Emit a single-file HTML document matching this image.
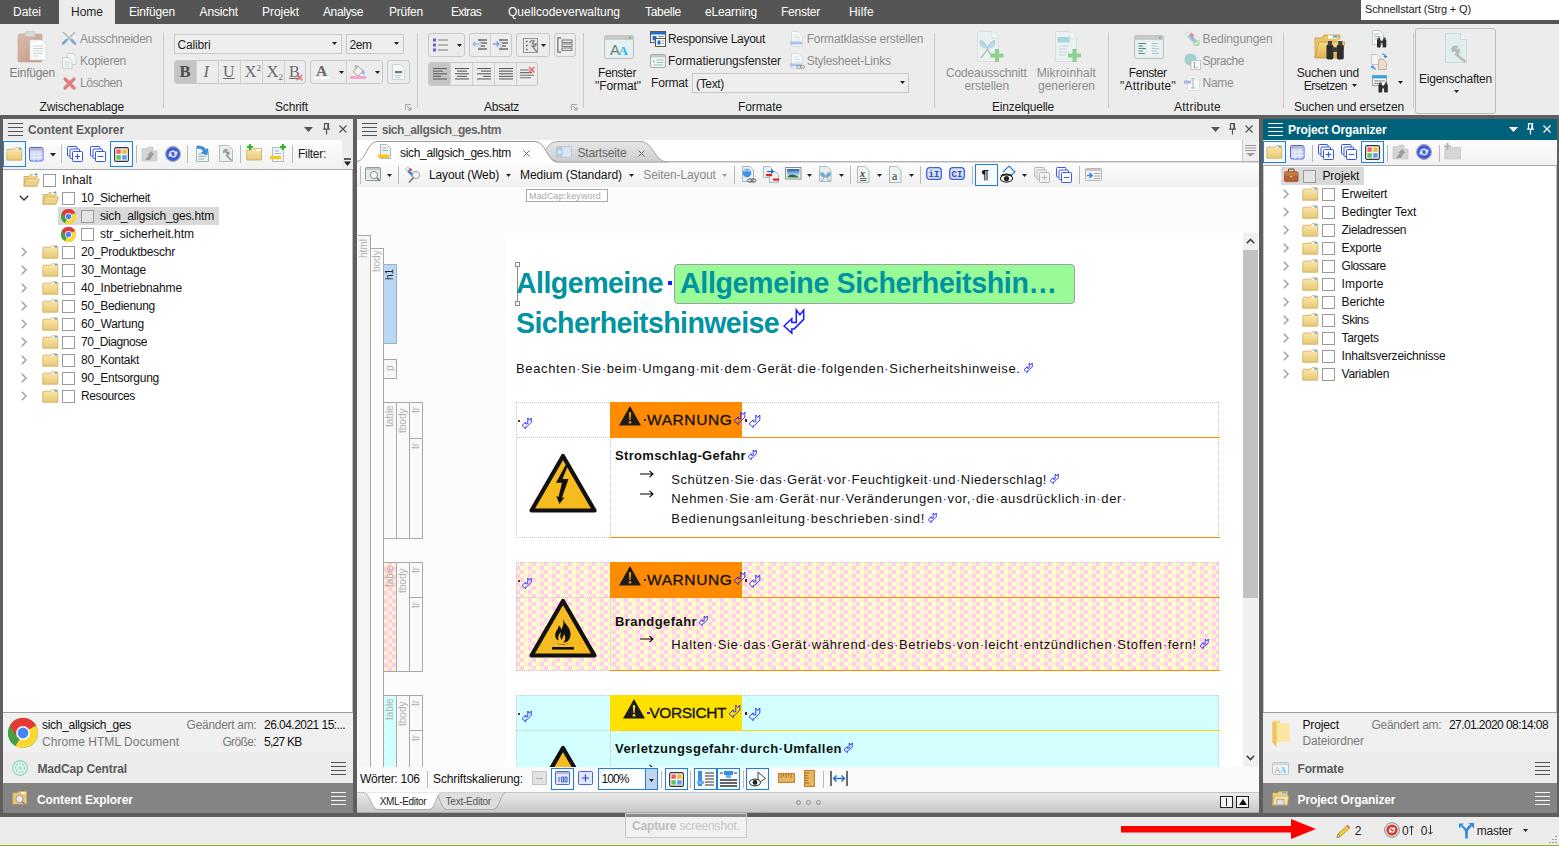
<!DOCTYPE html>
<html lang="de"><head><meta charset="utf-8"><title>MadCap Flare</title>
<style>
html,body{margin:0;padding:0;}
body{width:1559px;height:846px;overflow:hidden;background:#ececec;font-family:"Liberation Sans",sans-serif;font-size:12px;}
#root{position:relative;width:1559px;height:846px;overflow:hidden;}
.a{position:absolute;display:block;}
.t{position:absolute;white-space:nowrap;display:block;}
svg{overflow:visible;}
</style></head><body><div id="root">
<div class="a" style="left:0px;top:0px;width:1559px;height:24px;background:#555555;"></div>
<div class="a" style="left:59px;top:0px;width:56px;height:24px;background:#ececec;"></div>
<span class="t" style="left:13px;top:6px;font-size:12px;line-height:12px;color:#ffffff;letter-spacing:-0.003px;">Datei</span>
<span class="t" style="left:71px;top:6px;font-size:12px;line-height:12px;color:#1e1e1e;letter-spacing:-0.004px;">Home</span>
<span class="t" style="left:129px;top:6px;font-size:12px;line-height:12px;color:#ffffff;letter-spacing:-0.172px;">Einfügen</span>
<span class="t" style="left:199.5px;top:6px;font-size:12px;line-height:12px;color:#ffffff;letter-spacing:-0.123px;">Ansicht</span>
<span class="t" style="left:262px;top:6px;font-size:12px;line-height:12px;color:#ffffff;letter-spacing:-0.051px;">Projekt</span>
<span class="t" style="left:323px;top:6px;font-size:12px;line-height:12px;color:#ffffff;letter-spacing:-0.386px;">Analyse</span>
<span class="t" style="left:389px;top:6px;font-size:12px;line-height:12px;color:#ffffff;letter-spacing:-0.227px;">Prüfen</span>
<span class="t" style="left:451px;top:6px;font-size:12px;line-height:12px;color:#ffffff;letter-spacing:-0.669px;">Extras</span>
<span class="t" style="left:508px;top:6px;font-size:12px;line-height:12px;color:#ffffff;letter-spacing:-0.004px;">Quellcodeverwaltung</span>
<span class="t" style="left:645px;top:6px;font-size:12px;line-height:12px;color:#ffffff;letter-spacing:-0.290px;">Tabelle</span>
<span class="t" style="left:705px;top:6px;font-size:12px;line-height:12px;color:#ffffff;letter-spacing:-0.155px;">eLearning</span>
<span class="t" style="left:781px;top:6px;font-size:12px;line-height:12px;color:#ffffff;letter-spacing:-0.241px;">Fenster</span>
<span class="t" style="left:849px;top:6px;font-size:12px;line-height:12px;color:#ffffff;letter-spacing:0.197px;">Hilfe</span>
<div class="a" style="left:1361px;top:0px;width:198px;height:20px;background:#ffffff;"></div>
<span class="t" style="left:1365px;top:4px;font-size:11px;line-height:11px;color:#222;letter-spacing:-0.136px;">Schnellstart (Strg + Q)</span>
<div class="a" style="left:0px;top:24px;width:1559px;height:91px;background:#ececec;"></div>
<div class="a" style="left:163px;top:33px;width:1px;height:75px;background:#c9c9c9;"></div>
<div class="a" style="left:417px;top:33px;width:1px;height:75px;background:#c9c9c9;"></div>
<div class="a" style="left:583px;top:33px;width:1px;height:75px;background:#c9c9c9;"></div>
<div class="a" style="left:934px;top:33px;width:1px;height:75px;background:#c9c9c9;"></div>
<div class="a" style="left:1108px;top:33px;width:1px;height:75px;background:#c9c9c9;"></div>
<div class="a" style="left:1283px;top:33px;width:1px;height:75px;background:#c9c9c9;"></div>
<div class="a" style="left:1413px;top:33px;width:1px;height:75px;background:#c9c9c9;"></div>
<span class="t" style="left:39.5px;top:101px;font-size:12px;line-height:12px;color:#1e1e1e;letter-spacing:-0.158px;">Zwischenablage</span>
<span class="t" style="left:275px;top:101px;font-size:12px;line-height:12px;color:#1e1e1e;letter-spacing:-0.145px;">Schrift</span>
<span class="t" style="left:484px;top:101px;font-size:12px;line-height:12px;color:#1e1e1e;letter-spacing:-0.281px;">Absatz</span>
<span class="t" style="left:738px;top:101px;font-size:12px;line-height:12px;color:#1e1e1e;letter-spacing:-0.098px;">Formate</span>
<span class="t" style="left:992px;top:101px;font-size:12px;line-height:12px;color:#1e1e1e;letter-spacing:-0.227px;">Einzelquelle</span>
<span class="t" style="left:1174px;top:101px;font-size:12px;line-height:12px;color:#1e1e1e;letter-spacing:0.255px;">Attribute</span>
<span class="t" style="left:1294px;top:101px;font-size:12px;line-height:12px;color:#1e1e1e;letter-spacing:-0.180px;">Suchen und ersetzen</span>
<svg class="a" style="left:405px;top:104px;" width="7" height="7" viewBox="0 0 7 7"><path d="M0.5 6V0.5H6" fill="none" stroke="#aaa"/><path d="M2 2L6 6M6 3V6H3" fill="none" stroke="#999"/></svg>
<svg class="a" style="left:571px;top:104px;" width="7" height="7" viewBox="0 0 7 7"><path d="M0.5 6V0.5H6" fill="none" stroke="#aaa"/><path d="M2 2L6 6M6 3V6H3" fill="none" stroke="#999"/></svg>
<svg class="a" style="left:18px;top:31px;" width="29" height="32" viewBox="0 0 29 32"><defs><linearGradient id="gcb" x1="0" y1="0" x2="1" y2="1"><stop offset="0" stop-color="#dcbcae"/><stop offset="1" stop-color="#c39882"/></linearGradient></defs>
<rect x="0" y="3" width="24" height="28" rx="1.5" fill="url(#gcb)" stroke="#c8a595" stroke-width=".6"/>
<rect x="7" y="0.5" width="10" height="5" rx="1" fill="#d9d9d9" stroke="#c4c4c4" stroke-width=".6"/>
<path d="M12 9H24L28 13V29H12Z" fill="#fbfdfd" stroke="#cfd8d8" stroke-width=".7"/>
<path d="M15 15H25M15 17.5H25M15 20H25M15 22.5H25M15 25H21" stroke="#c5cdcd" stroke-width=".9"/></svg>
<span class="t" style="left:9.5px;top:67px;font-size:12px;line-height:12px;color:#7f7f7f;letter-spacing:-0.234px;">Einfügen</span>
<svg class="a" style="left:62px;top:31px;" width="14" height="14" viewBox="0 0 14 14"><path d="M1 1L12 12M13 1L2 12" stroke="#b5b9bd" stroke-width="1.6"/><path d="M1 12.5L4.5 9M13 12.5L9.5 9" stroke="#7fa6d6" stroke-width="2.6" stroke-linecap="round"/></svg>
<span class="t" style="left:80px;top:33px;font-size:12px;line-height:12px;color:#8c8c8c;letter-spacing:-0.283px;">Ausschneiden</span>
<svg class="a" style="left:62px;top:53px;" width="15" height="16" viewBox="0 0 15 16"><path d="M5 .5H11L14 3.5V11.5H5Z" fill="#f3f6f6" stroke="#c3caca" stroke-width=".8"/><path d="M.5 4.5H7L10 7.5V15.5H.5Z" fill="#f3f6f6" stroke="#c3caca" stroke-width=".8"/><path d="M2.5 9H8M2.5 11H8M2.5 13H8" stroke="#ccd3d3" stroke-width=".8"/></svg>
<span class="t" style="left:80px;top:55px;font-size:12px;line-height:12px;color:#8c8c8c;letter-spacing:-0.256px;">Kopieren</span>
<svg class="a" style="left:63px;top:77px;" width="13" height="13" viewBox="0 0 13 13"><path d="M2 2L11 11M11 2L2 11" stroke="#e27d7d" stroke-width="3.2" stroke-linecap="round"/></svg>
<span class="t" style="left:80px;top:77px;font-size:12px;line-height:12px;color:#8c8c8c;letter-spacing:-0.482px;">Löschen</span>
<div class="a" style="left:174px;top:34px;width:168px;height:20px;background:#eeeeee;border:1px solid #c8c8c8;box-sizing:border-box;"></div>
<span class="t" style="left:177.5px;top:39px;font-size:12px;line-height:12px;color:#1e1e1e;letter-spacing:-0.145px;">Calibri</span>
<svg class="a" style="left:331.5px;top:42.0px;" width="5" height="3" viewBox="0 0 5 3"><path d="M0 0H5L2.5 3Z" fill="#222"/></svg>
<div class="a" style="left:346px;top:34px;width:58px;height:20px;background:#eeeeee;border:1px solid #c8c8c8;box-sizing:border-box;"></div>
<span class="t" style="left:349.5px;top:39px;font-size:12px;line-height:12px;color:#1e1e1e;letter-spacing:-0.448px;">2em</span>
<svg class="a" style="left:393.5px;top:42.0px;" width="5" height="3" viewBox="0 0 5 3"><path d="M0 0H5L2.5 3Z" fill="#222"/></svg>
<div class="a" style="left:174px;top:60px;width:132px;height:24px;background:#ececec;border:1px solid #c8c8c8;box-sizing:border-box;border-radius:3px;"></div>
<div class="a" style="left:175px;top:61px;width:21px;height:22px;background:#c4c4c4;border-radius:2px;"></div>
<div class="a" style="left:196px;top:61px;width:1px;height:22px;background:#d0d0d0;"></div>
<div class="a" style="left:218px;top:61px;width:1px;height:22px;background:#d0d0d0;"></div>
<div class="a" style="left:240px;top:61px;width:1px;height:22px;background:#d0d0d0;"></div>
<div class="a" style="left:262px;top:61px;width:1px;height:22px;background:#d0d0d0;"></div>
<div class="a" style="left:284px;top:61px;width:1px;height:22px;background:#d0d0d0;"></div>
<span class="t" style="left:179.5px;top:64px;font-size:16.5px;line-height:16.5px;color:#4d4d4d;font-weight:bold;font-family:'Liberation Serif', serif;">B</span>
<span class="t" style="left:203.5px;top:64px;font-size:16.5px;line-height:16.5px;color:#6a6a6a;font-style:italic;font-family:'Liberation Serif', serif;">I</span>
<span class="t" style="left:223px;top:64px;font-size:16px;line-height:16px;color:#6a6a6a;font-family:'Liberation Serif', serif;text-decoration:underline;">U</span>
<span class="t" style="left:244.5px;top:64px;font-size:16.5px;line-height:16.5px;color:#6a6a6a;font-family:'Liberation Serif', serif;">X</span>
<span class="t" style="left:256.5px;top:64px;font-size:9px;line-height:9px;color:#6a6a6a;font-family:'Liberation Serif', serif;">2</span>
<span class="t" style="left:266.5px;top:64px;font-size:16.5px;line-height:16.5px;color:#6a6a6a;font-family:'Liberation Serif', serif;">X</span>
<span class="t" style="left:278.5px;top:73px;font-size:9px;line-height:9px;color:#6a6a6a;font-family:'Liberation Serif', serif;">2</span>
<span class="t" style="left:289px;top:64px;font-size:16px;line-height:16px;color:#6a6a6a;font-family:'Liberation Serif', serif;text-decoration:underline;">B</span>
<svg class="a" style="left:296px;top:74px;" width="7" height="7" viewBox="0 0 7 7"><path d="M.8 .8L6.2 6.2M6.2 .8L.8 6.2" stroke="#e26a6a" stroke-width="1.5"/></svg>
<div class="a" style="left:310px;top:60px;width:73px;height:24px;background:#ececec;border:1px solid #c8c8c8;box-sizing:border-box;border-radius:3px;"></div>
<div class="a" style="left:346px;top:61px;width:1px;height:22px;background:#d0d0d0;"></div>
<span class="t" style="left:316px;top:63px;font-size:15.5px;line-height:15.5px;color:#6a6a6a;font-weight:bold;font-family:'Liberation Serif', serif;">A</span>
<div class="a" style="left:314px;top:76.5px;width:16px;height:2.5px;background:#fdfdfd;"></div>
<svg class="a" style="left:338.5px;top:70.5px;" width="5" height="3" viewBox="0 0 5 3"><path d="M0 0H5L2.5 3Z" fill="#222"/></svg>
<svg class="a" style="left:374.5px;top:70.5px;" width="5" height="3" viewBox="0 0 5 3"><path d="M0 0H5L2.5 3Z" fill="#222"/></svg>
<svg class="a" style="left:350px;top:64px;" width="16" height="16" viewBox="0 0 16 16"><rect x="0" y="12" width="16" height="3" fill="#f5a3d3"/><path d="M3 8L8 2L13 7L8 12Z" fill="#f6f6f6" stroke="#9a9a9a" stroke-width=".9"/><path d="M12 5C15 7 15 10 13.5 11C12.5 10 12 8 12 5Z" fill="#8fa7df"/><path d="M6 1V5" stroke="#888"/></svg>
<div class="a" style="left:387px;top:60px;width:23px;height:24px;background:#ececec;border:1px solid #c8c8c8;box-sizing:border-box;border-radius:3px;"></div>
<svg class="a" style="left:392px;top:64px;" width="13" height="16" viewBox="0 0 13 16"><path d="M.5 .5H8.5L12.5 4.5V15.5H.5Z" fill="#f4f8f8" stroke="#c4cccc" stroke-width=".8"/><rect x="3" y="7" width="7" height="2.2" fill="#777"/><path d="M3 11.5H10M3 13.5H8" stroke="#a9d0d0" stroke-width=".9"/></svg>
<div class="a" style="left:428px;top:33px;width:37px;height:24px;background:#ececec;border:1px solid #c8c8c8;box-sizing:border-box;border-radius:3px;"></div>
<svg class="a" style="left:433px;top:37px;" width="16" height="16" viewBox="0 0 16 16"><rect x="0" y="1.5" width="3" height="3" fill="#6c5fc7"/><rect x="0" y="6.5" width="3" height="3" fill="#6c5fc7"/><rect x="0" y="11.5" width="3" height="3" fill="#6c5fc7"/><path d="M5 3H15M5 8H15M5 13H15" stroke="#7a7a7a" stroke-width="1.1"/></svg>
<svg class="a" style="left:456.5px;top:43.5px;" width="5" height="3" viewBox="0 0 5 3"><path d="M0 0H5L2.5 3Z" fill="#222"/></svg>
<div class="a" style="left:469px;top:33px;width:43px;height:24px;background:#ececec;border:1px solid #c8c8c8;box-sizing:border-box;border-radius:3px;"></div>
<div class="a" style="left:490px;top:34px;width:1px;height:22px;background:#d0d0d0;"></div>
<svg class="a" style="left:472px;top:38px;" width="16" height="14" viewBox="0 0 16 14"><path d="M7 6H1M3.5 3.5L1 6L3.5 8.5" fill="none" stroke="#9fb6e6" stroke-width="1.3"/><path d="M8 1V13" stroke="#8a8a8a" stroke-width=".8" stroke-dasharray="1.5 1"/><path d="M6 2H15M9 5H15M9 8H13M6 11H15" stroke="#6e6e6e" stroke-width="1.3"/></svg>
<svg class="a" style="left:493px;top:38px;" width="16" height="14" viewBox="0 0 16 14"><path d="M0 6H6M3.5 3.5L6 6L3.5 8.5" fill="none" stroke="#7f9fe6" stroke-width="1.3"/><path d="M8 1V13" stroke="#8a8a8a" stroke-width=".8" stroke-dasharray="1.5 1"/><path d="M6 2H15M9 5H15M9 8H13M6 11H15" stroke="#6e6e6e" stroke-width="1.3"/></svg>
<div class="a" style="left:516px;top:33px;width:34px;height:24px;background:#ececec;border:1px solid #c8c8c8;box-sizing:border-box;border-radius:3px;"></div>
<svg class="a" style="left:523px;top:38px;" width="15" height="15" viewBox="0 0 15 15"><rect x=".5" y=".5" width="14" height="14" fill="#e9e9e9" stroke="#8d8d8d" stroke-width=".9"/><path d="M3 3.5H4.5M3 7.5H4.5M3 11.5H4.5" stroke="#555" stroke-width="1.4"/><path d="M7 5C7 3 9 2 11 3L9.5 5L10.5 6.5L13 6C13 8 11 9 9.5 8.5L14 14" fill="none" stroke="#8a8a8a" stroke-width="1.6"/></svg>
<svg class="a" style="left:540.5px;top:43.5px;" width="5" height="3" viewBox="0 0 5 3"><path d="M0 0H5L2.5 3Z" fill="#222"/></svg>
<div class="a" style="left:554px;top:33px;width:22px;height:24px;background:#ececec;border:1px solid #c8c8c8;box-sizing:border-box;border-radius:3px;"></div>
<svg class="a" style="left:557px;top:37px;" width="16" height="16" viewBox="0 0 16 16"><path d="M4 .8H.8V15.2H4" fill="none" stroke="#6e6e6e" stroke-width="1.2"/><rect x="5" y="3" width="10" height="2.4" fill="none" stroke="#6e6e6e" stroke-width=".9"/><rect x="5" y="7" width="10" height="2.4" fill="none" stroke="#6e6e6e" stroke-width=".9"/><rect x="5" y="11" width="10" height="2.4" fill="none" stroke="#6e6e6e" stroke-width=".9"/></svg>
<div class="a" style="left:428px;top:62px;width:110px;height:24px;background:#ececec;border:1px solid #c8c8c8;box-sizing:border-box;border-radius:3px;"></div>
<div class="a" style="left:429px;top:63px;width:21px;height:22px;background:#c4c4c4;border-radius:2px;"></div>
<div class="a" style="left:450px;top:63px;width:1px;height:22px;background:#d0d0d0;"></div>
<div class="a" style="left:472px;top:63px;width:1px;height:22px;background:#d0d0d0;"></div>
<div class="a" style="left:494px;top:63px;width:1px;height:22px;background:#d0d0d0;"></div>
<div class="a" style="left:516px;top:63px;width:1px;height:22px;background:#d0d0d0;"></div>
<svg class="a" style="left:432.5px;top:68px;" width="14" height="13" viewBox="0 0 14 13"><rect x="0" y="0.0" width="14" height="1.1" fill="#5f5f5f"/><rect x="0" y="2.6" width="10" height="1.1" fill="#5f5f5f"/><rect x="0" y="5.2" width="14" height="1.1" fill="#5f5f5f"/><rect x="0" y="7.800000000000001" width="8" height="1.1" fill="#5f5f5f"/><rect x="0" y="10.4" width="14" height="1.1" fill="#5f5f5f"/></svg>
<svg class="a" style="left:454.5px;top:68px;" width="14" height="13" viewBox="0 0 14 13"><rect x="0.0" y="0.0" width="14" height="1.1" fill="#5f5f5f"/><rect x="2.0" y="2.6" width="10" height="1.1" fill="#5f5f5f"/><rect x="0.0" y="5.2" width="14" height="1.1" fill="#5f5f5f"/><rect x="2.0" y="7.800000000000001" width="10" height="1.1" fill="#5f5f5f"/><rect x="0.0" y="10.4" width="14" height="1.1" fill="#5f5f5f"/></svg>
<svg class="a" style="left:476.5px;top:68px;" width="14" height="13" viewBox="0 0 14 13"><rect x="0" y="0.0" width="14" height="1.1" fill="#5f5f5f"/><rect x="4" y="2.6" width="10" height="1.1" fill="#5f5f5f"/><rect x="0" y="5.2" width="14" height="1.1" fill="#5f5f5f"/><rect x="6" y="7.800000000000001" width="8" height="1.1" fill="#5f5f5f"/><rect x="0" y="10.4" width="14" height="1.1" fill="#5f5f5f"/></svg>
<svg class="a" style="left:498.5px;top:68px;" width="14" height="13" viewBox="0 0 14 13"><rect x="0" y="0.0" width="14" height="1.1" fill="#5f5f5f"/><rect x="0" y="2.6" width="14" height="1.1" fill="#5f5f5f"/><rect x="0" y="5.2" width="14" height="1.1" fill="#5f5f5f"/><rect x="0" y="7.800000000000001" width="14" height="1.1" fill="#5f5f5f"/><rect x="0" y="10.4" width="14" height="1.1" fill="#5f5f5f"/></svg>
<svg class="a" style="left:520px;top:66px;" width="16" height="15" viewBox="0 0 16 15"><path d="M0 4H9M0 6.6H12M0 9.2H14M0 11.8H11" stroke="#6e6e6e" stroke-width="1.1"/><path d="M9 1L14.5 6.5M14.5 1L9 6.5" stroke="#f06060" stroke-width="1.5"/></svg>
<svg class="a" style="left:604px;top:35px;" width="30" height="24" viewBox="0 0 30 24"><rect x=".5" y=".5" width="29" height="23" rx="2" fill="#e4f1f0" stroke="#bdbdbd"/><path d="M.5 5V2.5A2 2 0 0 1 2.5 .5H27.5A2 2 0 0 1 29.5 2.5V5Z" fill="#c9c9c9"/><circle cx="26" cy="2.8" r="1.3" fill="#5fd35f"/><text x="6" y="20" font-family="Liberation Sans" font-size="15" fill="#777">A</text><text x="14.5" y="20" font-family="Liberation Serif" font-weight="bold" font-size="13" fill="#2eb5f5">A</text></svg>
<span class="t" style="left:598px;top:67px;font-size:12px;line-height:12px;color:#1e1e1e;letter-spacing:-0.384px;">Fenster</span>
<span class="t" style="left:595px;top:80px;font-size:12px;line-height:12px;color:#1e1e1e;letter-spacing:-0.066px;">"Format"</span>
<svg class="a" style="left:650px;top:31px;" width="16" height="16" viewBox="0 0 16 16"><rect x=".5" y=".5" width="15" height="11" fill="#fff" stroke="#555"/><rect x="1" y="1" width="14" height="2.5" fill="#1d6fd0"/><rect x="2.5" y="5" width="4" height="4.5" fill="#1d6fd0"/><path d="M8 5.5H13.5M8 8H13.5" stroke="#888"/><rect x="5.5" y="7.5" width="10" height="8" fill="#fff" stroke="#555"/><rect x="7.5" y="9.5" width="3" height="4" fill="#1d6fd0"/><path d="M11.5 10H14M11.5 12.5H14" stroke="#888" stroke-width=".8"/></svg>
<span class="t" style="left:668px;top:33px;font-size:12px;line-height:12px;color:#1e1e1e;letter-spacing:-0.299px;">Responsive Layout</span>
<svg class="a" style="left:650px;top:54px;" width="16" height="14" viewBox="0 0 16 14"><rect x=".5" y=".5" width="15" height="13" rx="1.5" fill="#f2f8f8" stroke="#aaa"/><rect x="1" y="1" width="14" height="2.5" fill="#c8c8c8"/><path d="M3 6.2L5 7.5L3 8.8" fill="#6aa"/><path d="M6.5 6H13.5M6.5 8.5H13.5M3 11H13.5" stroke="#8fbcbc" stroke-width=".9"/></svg>
<span class="t" style="left:668px;top:55px;font-size:12px;line-height:12px;color:#1e1e1e;letter-spacing:-0.052px;">Formatierungsfenster</span>
<svg class="a" style="left:790px;top:31px;" width="14" height="16" viewBox="0 0 14 16"><path d="M1.5 .5H8.5L12.5 4.5V15.5H1.5Z" fill="#f4f8f8" stroke="#d0d6d6" stroke-width=".8"/><path d="M4 4H8M4 6.5H10M4 9H10" stroke="#d3dada" stroke-width=".8"/><rect x="0" y="10.5" width="12" height="3" fill="#a8c4ee"/></svg>
<span class="t" style="left:806.7px;top:33px;font-size:12px;line-height:12px;color:#8c8c8c;letter-spacing:-0.192px;">Formatklasse erstellen</span>
<svg class="a" style="left:790px;top:53px;" width="14" height="16" viewBox="0 0 14 16"><path d="M1.5 .5H8.5L12.5 4.5V15.5H1.5Z" fill="#f4f8f8" stroke="#d0d6d6" stroke-width=".8"/><path d="M4 4H8M4 6.5H10M4 9H10" stroke="#d3dada" stroke-width=".8"/><rect x="0" y="10.5" width="12" height="3" fill="#a8c4ee"/><ellipse cx="9" cy="14" rx="2.3" ry="1.6" fill="none" stroke="#999" stroke-width=".9"/><ellipse cx="12.5" cy="14" rx="2.3" ry="1.6" fill="none" stroke="#999" stroke-width=".9"/></svg>
<span class="t" style="left:806.7px;top:55px;font-size:12px;line-height:12px;color:#8c8c8c;letter-spacing:-0.253px;">Stylesheet-Links</span>
<span class="t" style="left:651px;top:77px;font-size:12px;line-height:12px;color:#1e1e1e;letter-spacing:-0.169px;">Format</span>
<div class="a" style="left:692px;top:73px;width:217px;height:20px;background:#eeeeee;border:1px solid #c8c8c8;box-sizing:border-box;"></div>
<span class="t" style="left:696px;top:78px;font-size:12px;line-height:12px;color:#1e1e1e;letter-spacing:-0.333px;">(Text)</span>
<svg class="a" style="left:900.0px;top:81.0px;" width="5" height="3" viewBox="0 0 5 3"><path d="M0 0H5L2.5 3Z" fill="#222"/></svg>
<svg class="a" style="left:977px;top:31px;" width="28" height="32" viewBox="0 0 28 32"><path d="M.5 .5H15L21.5 7V30.5H.5Z" fill="#e9f1f1" stroke="#d3dada" stroke-width=".8"/><path d="M15 .5V7H21.5" fill="#f6fafa" stroke="#d3dada" stroke-width=".8"/><path d="M3 10C6 9 9 14 11 18L4 27M18 10C15 9 12 14 10 18L14 24" fill="none" stroke="#bdbdbd" stroke-width="1.4"/><path d="M2.5 10.5C6 8 9 14 10.5 17C6 18 2 16 2.5 10.5ZM18.5 10.5C15 8 12 14 10.5 17C15 18 19 16 18.5 10.5Z" fill="#a9d7e6" opacity=".85"/><path d="M20 18V31M13.5 24.5H26.5" stroke="#8fd28f" stroke-width="4"/></svg>
<span class="t" style="left:946px;top:67px;font-size:12px;line-height:12px;color:#8c8c8c;letter-spacing:-0.144px;">Codeausschnitt</span>
<span class="t" style="left:964.5px;top:80px;font-size:12px;line-height:12px;color:#8c8c8c;letter-spacing:-0.095px;">erstellen</span>
<svg class="a" style="left:1055px;top:31px;" width="27" height="32" viewBox="0 0 27 32"><path d="M.5 .5H15L21.5 7V30.5H.5Z" fill="#e9f1f1" stroke="#d3dada" stroke-width=".8"/><path d="M15 .5V7H21.5" fill="#f6fafa" stroke="#d3dada" stroke-width=".8"/><rect x="2.5" y="6" width="12" height="5.5" fill="#a7d4df"/><path d="M4 15H14M4 18H12M4 21H14M4 24H11" stroke="#cdd6d6" stroke-width="1"/><path d="M19.5 18V31M13 24.5H26" stroke="#8fd28f" stroke-width="4"/></svg>
<span class="t" style="left:1036.7px;top:67px;font-size:12px;line-height:12px;color:#8c8c8c;letter-spacing:0.115px;">Mikroinhalt</span>
<span class="t" style="left:1038px;top:80px;font-size:12px;line-height:12px;color:#8c8c8c;letter-spacing:-0.037px;">generieren</span>
<svg class="a" style="left:1134px;top:35px;" width="30" height="24" viewBox="0 0 30 24"><rect x=".5" y=".5" width="29" height="23" rx="2" fill="#e4f1f0" stroke="#bdbdbd"/><path d="M.5 5V2.5A2 2 0 0 1 2.5 .5H27.5A2 2 0 0 1 29.5 2.5V5Z" fill="#c9c9c9"/><circle cx="26" cy="2.8" r="1.3" fill="#5fd35f"/><path d="M15 6V21" stroke="#fff" stroke-width="1.2"/><path d="M4.5 8.5H12M4.5 11H9M4.5 13.5H12M4.5 16H9M4.5 18.5H11" stroke="#5d8a8a" stroke-width="1.1"/><path d="M18 8.5H24M18 11H23M18 13.5H25M18 16H23M18 18.5H25" stroke="#a8cccc" stroke-width="1"/></svg>
<span class="t" style="left:1128.7px;top:67px;font-size:12px;line-height:12px;color:#1e1e1e;letter-spacing:-0.384px;">Fenster</span>
<span class="t" style="left:1120px;top:80px;font-size:12px;line-height:12px;color:#1e1e1e;letter-spacing:0.253px;">"Attribute"</span>
<svg class="a" style="left:1184px;top:31px;" width="17" height="16" viewBox="0 0 17 16"><path d="M1 2.5L4 .8L14 11L11 14Z" fill="#f1f1f1" stroke="#c4c4c4" stroke-width=".8"/><path d="M5 4L12 11.5" stroke="#8fb3ea" stroke-width="2.6"/><path d="M6.5 2.5L9.5 5.5" stroke="#ee8d8d" stroke-width="2.6"/><circle cx="12.5" cy="12" r="3.2" fill="#a5dca5"/><path d="M11 12L12.2 13.2L14.2 10.8" fill="none" stroke="#fff" stroke-width="1"/></svg>
<span class="t" style="left:1202.5px;top:33px;font-size:12px;line-height:12px;color:#8c8c8c;letter-spacing:-0.067px;">Bedingungen</span>
<svg class="a" style="left:1184px;top:53px;" width="17" height="17" viewBox="0 0 17 17"><circle cx="6.5" cy="6.5" r="6" fill="#9ecbe6"/><path d="M3 3C5 2 7 4 6 6C5 8 3 7 2 9M8 8C10 7 11 9 10 11" fill="none" stroke="#a6dba0" stroke-width="2"/><rect x="7" y="7.5" width="9.5" height="9" fill="#fafafa" stroke="#bbb" stroke-width=".8"/><text x="9" y="15" font-family="Liberation Serif" font-size="8.5" fill="#888">L</text></svg>
<span class="t" style="left:1202.5px;top:55px;font-size:12px;line-height:12px;color:#8c8c8c;letter-spacing:-0.458px;">Sprache</span>
<svg class="a" style="left:1184px;top:75px;" width="17" height="16" viewBox="0 0 17 16"><path d="M3.5 .5H11.5L15.5 4.5V15.5H3.5Z" fill="#f4f8f8" stroke="#d3dada" stroke-width=".8"/><rect x="0" y="5.5" width="7" height="3" fill="#a9b6ea"/><path d="M7 3.5H11M9 3.5V13M7 13H11" stroke="#b5b5b5" stroke-width="1.1" fill="none"/></svg>
<span class="t" style="left:1202.5px;top:77px;font-size:12px;line-height:12px;color:#8c8c8c;letter-spacing:-0.254px;">Name</span>
<svg class="a" style="left:1314px;top:33px;" width="33" height="27" viewBox="0 0 33 27"><defs><linearGradient id="gfo" x1="0" y1="0" x2="0" y2="1"><stop offset="0" stop-color="#f7dc8a"/><stop offset="1" stop-color="#e0b04c"/></linearGradient></defs>
<path d="M1 25V5H8L10 2H26V6" fill="#e9c468" stroke="#c99c3d" stroke-width=".8"/><rect x="14" y="2.5" width="9" height="3" fill="#fff"/><rect x="19" y="2.5" width="4" height="2" fill="#34a8ea"/>
<path d="M1 25L5 9H31L27 25Z" fill="url(#gfo)" stroke="#c99c3d" stroke-width=".8"/><g transform="translate(12.5,8) scale(1.15)"><rect x="0" y="3" width="6" height="13" rx="1.5" fill="#2d2d2d"/><rect x="9" y="3" width="6" height="13" rx="1.5" fill="#2d2d2d"/><rect x="1.2" y="0" width="3.6" height="4" fill="#444"/><rect x="10.2" y="0" width="3.6" height="4" fill="#444"/><rect x="5" y="5.5" width="5" height="4" fill="#3a3a3a"/></g></svg>
<span class="t" style="left:1296.7px;top:67px;font-size:12px;line-height:12px;color:#1e1e1e;letter-spacing:-0.176px;">Suchen und</span>
<span class="t" style="left:1303.7px;top:80px;font-size:12px;line-height:12px;color:#1e1e1e;letter-spacing:-0.507px;">Ersetzen</span>
<svg class="a" style="left:1351.5px;top:83.5px;" width="5" height="3" viewBox="0 0 5 3"><path d="M0 0H5L2.5 3Z" fill="#222"/></svg>
<svg class="a" style="left:1372px;top:30px;" width="15" height="17" viewBox="0 0 15 17"><path d="M.5 .5H7.5L11.5 4.5V14.5H.5Z" fill="#f7fafa" stroke="#b5bcbc" stroke-width=".8"/><path d="M2.5 4H7M2.5 6.5H9M2.5 9H9" stroke="#9aa" stroke-width=".8"/><g transform="translate(5,7.5) scale(0.62)"><rect x="0" y="3" width="6" height="13" rx="1.5" fill="#2d2d2d"/><rect x="9" y="3" width="6" height="13" rx="1.5" fill="#2d2d2d"/><rect x="1.2" y="0" width="3.6" height="4" fill="#444"/><rect x="10.2" y="0" width="3.6" height="4" fill="#444"/><rect x="5" y="5.5" width="5" height="4" fill="#3a3a3a"/></g></svg>
<svg class="a" style="left:1371px;top:53px;" width="16" height="17" viewBox="0 0 16 17"><path d="M.5 1.5H6.5L9.5 4.5V11.5H.5Z" fill="#f2f5f5" stroke="#b5bcbc" stroke-width=".8"/><path d="M7.5 6.5H12.5L15.5 9.5V16.5H7.5Z" fill="#ecdcc8" stroke="#b9a38a" stroke-width=".8"/><path d="M11 1C13.5 1 14.5 2.5 14.5 4.5M14.5 4.5L13 3M14.5 4.5L16 3" fill="none" stroke="#2a8be6" stroke-width="1.1"/><path d="M5 16C2.5 16 1.5 14.8 1.5 13M1.5 13L0 14.5M1.5 13L3 14.5" fill="none" stroke="#2a8be6" stroke-width="1.1"/></svg>
<svg class="a" style="left:1372px;top:75px;" width="16" height="17" viewBox="0 0 16 17"><rect x=".5" y=".5" width="14" height="10" fill="#fff" stroke="#8a8a8a" stroke-width=".8"/><rect x=".5" y=".5" width="14" height="3" fill="#36a5ea"/><path d="M2 6H13M2 8.5H10" stroke="#777" stroke-width="1"/><g transform="translate(6.5,7.5) scale(0.62)"><rect x="0" y="3" width="6" height="13" rx="1.5" fill="#2d2d2d"/><rect x="9" y="3" width="6" height="13" rx="1.5" fill="#2d2d2d"/><rect x="1.2" y="0" width="3.6" height="4" fill="#444"/><rect x="10.2" y="0" width="3.6" height="4" fill="#444"/><rect x="5" y="5.5" width="5" height="4" fill="#3a3a3a"/></g></svg>
<svg class="a" style="left:1397.5px;top:80.5px;" width="5" height="3" viewBox="0 0 5 3"><path d="M0 0H5L2.5 3Z" fill="#222"/></svg>
<div class="a" style="left:1415px;top:28px;width:81px;height:86px;background:#ececec;border:1px solid #bdbdbd;box-sizing:border-box;border-radius:3px;"></div>
<svg class="a" style="left:1445px;top:33px;" width="23" height="31" viewBox="0 0 23 31"><path d="M.5 .5H15.5L21.5 6.5V29.5H.5Z" fill="#e0efee" stroke="#c5d3d2" stroke-width=".8"/><path d="M15.5 .5V6.5H21.5" fill="#f3f9f9" stroke="#c5d3d2" stroke-width=".8"/><path d="M8 18C6.5 15.5 9 13 11.5 14L9.8 16.3L11.2 18L13.8 17C14.5 19.5 12 21.5 10.2 20.6L20 28.5" fill="none" stroke="#b9bcbc" stroke-width="2.6" stroke-linecap="round"/></svg>
<span class="t" style="left:1419px;top:73px;font-size:12px;line-height:12px;color:#1e1e1e;letter-spacing:-0.236px;">Eigenschaften</span>
<svg class="a" style="left:1453.5px;top:89.5px;" width="5" height="3" viewBox="0 0 5 3"><path d="M0 0H5L2.5 3Z" fill="#222"/></svg>
<div class="a" style="left:0px;top:115px;width:1559px;height:4px;background:#5f5f5f;"></div>
<div class="a" style="left:0px;top:119px;width:357px;height:698px;background:#5f5f5f;"></div>
<div class="a" style="left:3px;top:119px;width:350px;height:21px;background:#ececec;"></div>
<svg class="a" width="0" height="0"><defs><linearGradient id="gf" x1="0" y1="0" x2="0" y2="1"><stop offset="0" stop-color="#fbe9ae"/><stop offset="1" stop-color="#e9c877"/></linearGradient></defs></svg>
<svg class="a" style="left:8px;top:123px;" width="15" height="13" viewBox="0 0 15 13"><rect x="0" y="0" width="15" height="1" fill="#555"/><rect x="0" y="4" width="15" height="1" fill="#555"/><rect x="0" y="8" width="15" height="1" fill="#555"/><rect x="0" y="12" width="15" height="1" fill="#555"/></svg>
<span class="t" style="left:28px;top:124px;font-size:12px;line-height:12px;color:#5e5e5e;font-weight:bold;letter-spacing:-0.084px;">Content Explorer</span>
<svg class="a" style="left:303.5px;top:127px;" width="9" height="5" viewBox="0 0 9 5"><path d="M0 0H9L4.5 5Z" fill="#555"/></svg>
<svg class="a" style="left:322.5px;top:123px;" width="7" height="12" viewBox="0 0 7 12"><path d="M1.5 .7H5.5V6H1.5ZM0 6.2H7M3.5 6.2V11.5" fill="none" stroke="#555" stroke-width="1.2"/><path d="M4.8 1V6" stroke="#555" stroke-width="1"/></svg>
<svg class="a" style="left:338.5px;top:125px;" width="8" height="8" viewBox="0 0 8 8"><path d="M.5 .5L7.5 7.5M7.5 .5L.5 7.5" stroke="#555" stroke-width="1.2"/></svg>
<div class="a" style="left:3px;top:140px;width:350px;height:29px;background:linear-gradient(#fdfdfd,#f1f1f1);"></div>
<div class="a" style="left:342px;top:140px;width:11px;height:29px;background:#ececec;"></div>
<svg class="a" style="left:343px;top:158px;" width="9" height="9" viewBox="0 0 9 9"><path d="M1 1H8" stroke="#222" stroke-width="1.4"/><path d="M1 3.5H8L4.5 8Z" fill="#222"/></svg>
<div class="a" style="left:3px;top:141px;width:23px;height:26px;background:#f4f9ff;border:1px solid #1f7fd8;box-sizing:border-box;"></div>
<svg class="a" style="left:6px;top:147px;" width="17" height="14" viewBox="0 0 17 14"><path d="M.8 13.2V3.2C.8 2.6 1.2 2.2 1.8 2.2H8.5L10 .8H14.5C15.3 .8 15.8 1.3 15.8 2V13.2Z" fill="url(#gf)" stroke="#cfa955" stroke-width=".8"/><path d="M10.5 1.3H14.5V3H10.5Z" fill="#fff"/><path d="M12.3 1.2H15V2.6H12.3Z" fill="#3ba6e6"/><path d="M1 4.3H15.6" stroke="#f6e3a6" stroke-width=".8"/></svg>
<svg class="a" style="left:29px;top:147px;" width="15" height="15" viewBox="0 0 15 15"><rect x=".5" y=".5" width="13.5" height="13.5" rx="1.5" fill="#cfd8fb" stroke="#4a66e0"/><rect x="1" y="1" width="12.5" height="2.6" fill="#b8b8c8"/><path d="M1 7H14M1 10.5H14M5 4V14M9.5 4V14" stroke="#eef1ff" stroke-width=".9"/></svg>
<svg class="a" style="left:50px;top:152.5px;" width="6" height="3.5" viewBox="0 0 6 3.5"><path d="M0 0H6L3 3.5Z" fill="#222"/></svg>
<div class="a" style="left:61px;top:145px;width:1px;height:18px;background:#b9b9b9;"></div>
<svg class="a" style="left:66.5px;top:146px;" width="16" height="16" viewBox="0 0 16 16"><rect x=".5" y=".5" width="9.5" height="9.5" rx=".8" fill="#fff" stroke="#3555e0"/><rect x="3" y="3" width="9.5" height="9.5" rx=".8" fill="#fff" stroke="#3555e0"/><rect x="5.5" y="5.5" width="10" height="10" rx=".8" fill="#fff" stroke="#3555e0"/><path d="M7.8 10.5H13.2M10.5 7.8V13.2" stroke="#3555e0" stroke-width="1.1"/></svg>
<svg class="a" style="left:89.5px;top:146px;" width="16" height="16" viewBox="0 0 16 16"><rect x=".5" y=".5" width="9.5" height="9.5" rx=".8" fill="#fff" stroke="#3555e0"/><rect x="3" y="3" width="9.5" height="9.5" rx=".8" fill="#fff" stroke="#3555e0"/><rect x="5.5" y="5.5" width="10" height="10" rx=".8" fill="#fff" stroke="#3555e0"/><path d="M7.8 10.5H13.2" stroke="#3555e0" stroke-width="1.1"/></svg>
<div class="a" style="left:110px;top:141px;width:23px;height:26px;background:#f4f9ff;border:1px solid #1f7fd8;box-sizing:border-box;"></div>
<svg class="a" style="left:113.5px;top:146.5px;" width="15" height="15" viewBox="0 0 15 15"><rect x=".6" y=".6" width="13.8" height="13.8" rx="1.5" fill="#f4f4f4" stroke="#333" stroke-width="1.1"/><rect x="2.4" y="2.4" width="4.4" height="4.4" fill="#f0606a"/><rect x="8.2" y="2.4" width="4.4" height="4.4" fill="#f5b932"/><rect x="2.4" y="8.2" width="4.4" height="4.4" fill="#5bc45b"/><rect x="8.2" y="8.2" width="4.4" height="4.4" fill="#5b9bf0"/></svg>
<div class="a" style="left:136px;top:145px;width:1px;height:18px;background:#b9b9b9;"></div>
<svg class="a" style="left:141px;top:146px;" width="17" height="16" viewBox="0 0 17 16"><path d="M1 15V2.5H6L7.5 1H12V5H16V15Z" fill="#d4d4d4" stroke="#c4c4c4" stroke-width=".6"/><path d="M4 14L8 9H6.5L10 5L13.5 9H12L9 14Z" fill="#9c9c9c"/></svg>
<svg class="a" style="left:165px;top:146px;" width="16" height="16" viewBox="0 0 16 16"><circle cx="8" cy="8" r="7.4" fill="#3d5bd9" stroke="#9aa0b8" stroke-width="1.1"/><path d="M4 7.5C4.5 4.5 9 3.5 11 6L12.3 4.7V8.5H8.5L9.9 7.1C8.5 5.3 5.8 6 5.5 7.8Z" fill="#e6ebff"/><path d="M12 8.5C11.5 11.5 7 12.5 5 10L3.7 11.3V7.5H7.5L6.1 8.9C7.5 10.7 10.2 10 10.5 8.2Z" fill="#e6ebff"/></svg>
<div class="a" style="left:187px;top:145px;width:1px;height:18px;background:#b9b9b9;"></div>
<svg class="a" style="left:195px;top:145px;" width="16" height="17" viewBox="0 0 16 17"><path d="M1.5 2.5H9.5L13.5 6.5V16.5H1.5Z" fill="#eef5f5" stroke="#8fa5a5" stroke-width=".8"/><path d="M3.5 9H11M3.5 11.5H11M3.5 14H9" stroke="#7c9c9c" stroke-width=".8"/><path d="M2 1C6 .5 9 2 10.5 5L13 3.5L12 10L6.5 7.5L8.5 6.3C7.5 4 5 3 2 3.5Z" fill="#2f8fe6" stroke="#1c6fc0" stroke-width=".5"/></svg>
<svg class="a" style="left:219px;top:145px;" width="15" height="17" viewBox="0 0 15 17"><path d="M.5 .5H9.5L13.5 4.5V16.5H.5Z" fill="#e9efef" stroke="#a5b1b1" stroke-width=".8"/><path d="M5 8C4 6 6 4 8 5L6.8 6.8L7.8 8L9.8 7.4C10.3 9.5 8.3 10.8 7 10L12.5 15.5" fill="none" stroke="#9a9a9a" stroke-width="1.7"/></svg>
<div class="a" style="left:240px;top:145px;width:1px;height:18px;background:#b9b9b9;"></div>
<svg class="a" style="left:246px;top:144px;" width="17" height="17" viewBox="0 0 17 17"><path d="M.8 16V6H6L7.5 4.5H15.5V16Z" fill="url(#gf)" stroke="#cfa955" stroke-width=".8"/><path d="M10 5H14.5V6.8H10Z" fill="#fff"/><path d="M1 3H7M4 0V6" stroke="#2fb52f" stroke-width="2.2"/></svg>
<svg class="a" style="left:270px;top:144px;" width="17" height="18" viewBox="0 0 17 18"><path d="M2.5 3.5H10L13.5 7V17.5H2.5Z" fill="#eef3f3" stroke="#a5b1b1" stroke-width=".8"/><path d="M4.5 7H9M4.5 9.5H11" stroke="#9ab" stroke-width=".8"/><rect x="0" y="12" width="11" height="3.2" fill="#f8c81c"/><path d="M10 3H16M13 0V6" stroke="#2fb52f" stroke-width="2.2"/></svg>
<div class="a" style="left:292px;top:145px;width:1px;height:18px;background:#b9b9b9;"></div>
<span class="t" style="left:298px;top:148px;font-size:12px;line-height:12px;color:#1a1a1a;letter-spacing:-0.286px;">Filter:</span>
<div class="a" style="left:3px;top:169px;width:350px;height:1px;background:#a9a9a9;"></div>
<div class="a" style="left:3px;top:170px;width:350px;height:542px;background:#ffffff;"></div>
<div class="a" style="left:352px;top:170px;width:1px;height:542px;background:#bdbdbd;"></div>
<div class="a" style="left:58px;top:207px;width:161px;height:18px;background:#d9d9d9;"></div>
<svg class="a" style="left:23px;top:173px;" width="17" height="14" viewBox="0 0 17 14"><path d="M1 13V3.5H6L7.5 1.5H14V5" fill="#efd28a" stroke="#c9a450" stroke-width=".8"/><path d="M9.5 1.2H13.5V3H9.5Z" fill="#fff"/><path d="M11.5 .8H14V2.2H11.5Z" fill="#3ba6e6"/><path d="M13.3 .2H14.3V1.2H13.3Z" fill="#3c3"/><path d="M.8 13.3L3 6H16.3L13.8 13.3Z" fill="url(#gf)" stroke="#c9a450" stroke-width=".8"/><path d="M3 9H15" stroke="#d9b765" stroke-width=".6"/></svg>
<div class="a" style="left:43px;top:174px;width:13px;height:13px;background:#fff;border:1px solid #9a9a9a;box-sizing:border-box;"></div>
<span class="t" style="left:62px;top:174px;font-size:12px;line-height:12px;color:#111;letter-spacing:0.107px;">Inhalt</span>
<svg class="a" style="left:19px;top:195px;" width="10" height="6" viewBox="0 0 10 6"><path d="M.8 .8L5 5L9.2 .8" fill="none" stroke="#333" stroke-width="1.4"/></svg>
<svg class="a" style="left:42px;top:191px;" width="17" height="14" viewBox="0 0 17 14"><path d="M1 13V3.5H6L7.5 1.5H14V5" fill="#efd28a" stroke="#c9a450" stroke-width=".8"/><path d="M9.5 1.2H13.5V3H9.5Z" fill="#fff"/><path d="M11.5 .8H14V2.2H11.5Z" fill="#3ba6e6"/><path d="M13.3 .2H14.3V1.2H13.3Z" fill="#3c3"/><path d="M.8 13.3L3 6H16.3L13.8 13.3Z" fill="url(#gf)" stroke="#c9a450" stroke-width=".8"/><path d="M3 9H15" stroke="#d9b765" stroke-width=".6"/></svg>
<div class="a" style="left:62px;top:192px;width:13px;height:13px;background:#fff;border:1px solid #9a9a9a;box-sizing:border-box;"></div>
<span class="t" style="left:81px;top:192px;font-size:12px;line-height:12px;color:#111;letter-spacing:-0.338px;">10_Sicherheit</span>
<svg class="a" style="left:61px;top:208.5px;" width="15" height="15" viewBox="0 0 20 20"><circle cx="10" cy="10" r="10" fill="#4caf50"/><path d="M10 10L1.34 5A10 10 0 0 1 18.66 5Z" fill="#e53935"/><path d="M10 10L18.66 5A10 10 0 0 1 5 18.66Z" fill="#fdd835"/><path d="M10 10L5 18.66A10 10 0 0 1 1.34 5Z" fill="#43a047"/><path d="M10 5.5H18.9A10 10 0 0 0 1.34 5L5.6 12Z" fill="#e53935"/><circle cx="10" cy="10" r="4.6" fill="#fff"/><circle cx="10" cy="10" r="3.6" fill="#4285f4"/></svg>
<div class="a" style="left:81px;top:210px;width:13px;height:13px;background:#e4e4e4;border:1px solid #9a9a9a;box-sizing:border-box;"></div>
<span class="t" style="left:100px;top:210px;font-size:12px;line-height:12px;color:#111;letter-spacing:-0.162px;">sich_allgsich_ges.htm</span>
<svg class="a" style="left:61px;top:226.5px;" width="15" height="15" viewBox="0 0 20 20"><circle cx="10" cy="10" r="10" fill="#4caf50"/><path d="M10 10L1.34 5A10 10 0 0 1 18.66 5Z" fill="#e53935"/><path d="M10 10L18.66 5A10 10 0 0 1 5 18.66Z" fill="#fdd835"/><path d="M10 10L5 18.66A10 10 0 0 1 1.34 5Z" fill="#43a047"/><path d="M10 5.5H18.9A10 10 0 0 0 1.34 5L5.6 12Z" fill="#e53935"/><circle cx="10" cy="10" r="4.6" fill="#fff"/><circle cx="10" cy="10" r="3.6" fill="#4285f4"/></svg>
<div class="a" style="left:81px;top:228px;width:13px;height:13px;background:#fff;border:1px solid #9a9a9a;box-sizing:border-box;"></div>
<span class="t" style="left:100px;top:228px;font-size:12px;line-height:12px;color:#111;letter-spacing:-0.039px;">str_sicherheit.htm</span>
<svg class="a" style="left:21px;top:247px;" width="6" height="10" viewBox="0 0 6 10"><path d="M.8 .8L5 5L.8 9.2" fill="none" stroke="#a2a2a2" stroke-width="1.5"/></svg>
<svg class="a" style="left:42px;top:245px;" width="17" height="14" viewBox="0 0 17 14"><path d="M.8 13.2V3.2C.8 2.6 1.2 2.2 1.8 2.2H8.5L10 .8H14.5C15.3 .8 15.8 1.3 15.8 2V13.2Z" fill="url(#gf)" stroke="#cfa955" stroke-width=".8"/><path d="M10.5 1.3H14.5V3H10.5Z" fill="#fff"/><path d="M12.3 1.2H15V2.6H12.3Z" fill="#3ba6e6"/><path d="M1 4.3H15.6" stroke="#f6e3a6" stroke-width=".8"/></svg>
<div class="a" style="left:62px;top:246px;width:13px;height:13px;background:#fff;border:1px solid #9a9a9a;box-sizing:border-box;"></div>
<span class="t" style="left:81px;top:246px;font-size:12px;line-height:12px;color:#111;letter-spacing:-0.213px;">20_Produktbeschr</span>
<svg class="a" style="left:21px;top:265px;" width="6" height="10" viewBox="0 0 6 10"><path d="M.8 .8L5 5L.8 9.2" fill="none" stroke="#a2a2a2" stroke-width="1.5"/></svg>
<svg class="a" style="left:42px;top:263px;" width="17" height="14" viewBox="0 0 17 14"><path d="M.8 13.2V3.2C.8 2.6 1.2 2.2 1.8 2.2H8.5L10 .8H14.5C15.3 .8 15.8 1.3 15.8 2V13.2Z" fill="url(#gf)" stroke="#cfa955" stroke-width=".8"/><path d="M10.5 1.3H14.5V3H10.5Z" fill="#fff"/><path d="M12.3 1.2H15V2.6H12.3Z" fill="#3ba6e6"/><path d="M1 4.3H15.6" stroke="#f6e3a6" stroke-width=".8"/></svg>
<div class="a" style="left:62px;top:264px;width:13px;height:13px;background:#fff;border:1px solid #9a9a9a;box-sizing:border-box;"></div>
<span class="t" style="left:81px;top:264px;font-size:12px;line-height:12px;color:#111;letter-spacing:-0.173px;">30_Montage</span>
<svg class="a" style="left:21px;top:283px;" width="6" height="10" viewBox="0 0 6 10"><path d="M.8 .8L5 5L.8 9.2" fill="none" stroke="#a2a2a2" stroke-width="1.5"/></svg>
<svg class="a" style="left:42px;top:281px;" width="17" height="14" viewBox="0 0 17 14"><path d="M.8 13.2V3.2C.8 2.6 1.2 2.2 1.8 2.2H8.5L10 .8H14.5C15.3 .8 15.8 1.3 15.8 2V13.2Z" fill="url(#gf)" stroke="#cfa955" stroke-width=".8"/><path d="M10.5 1.3H14.5V3H10.5Z" fill="#fff"/><path d="M12.3 1.2H15V2.6H12.3Z" fill="#3ba6e6"/><path d="M1 4.3H15.6" stroke="#f6e3a6" stroke-width=".8"/></svg>
<div class="a" style="left:62px;top:282px;width:13px;height:13px;background:#fff;border:1px solid #9a9a9a;box-sizing:border-box;"></div>
<span class="t" style="left:81px;top:282px;font-size:12px;line-height:12px;color:#111;letter-spacing:-0.142px;">40_Inbetriebnahme</span>
<svg class="a" style="left:21px;top:301px;" width="6" height="10" viewBox="0 0 6 10"><path d="M.8 .8L5 5L.8 9.2" fill="none" stroke="#a2a2a2" stroke-width="1.5"/></svg>
<svg class="a" style="left:42px;top:299px;" width="17" height="14" viewBox="0 0 17 14"><path d="M.8 13.2V3.2C.8 2.6 1.2 2.2 1.8 2.2H8.5L10 .8H14.5C15.3 .8 15.8 1.3 15.8 2V13.2Z" fill="url(#gf)" stroke="#cfa955" stroke-width=".8"/><path d="M10.5 1.3H14.5V3H10.5Z" fill="#fff"/><path d="M12.3 1.2H15V2.6H12.3Z" fill="#3ba6e6"/><path d="M1 4.3H15.6" stroke="#f6e3a6" stroke-width=".8"/></svg>
<div class="a" style="left:62px;top:300px;width:13px;height:13px;background:#fff;border:1px solid #9a9a9a;box-sizing:border-box;"></div>
<span class="t" style="left:81px;top:300px;font-size:12px;line-height:12px;color:#111;letter-spacing:-0.285px;">50_Bedienung</span>
<svg class="a" style="left:21px;top:319px;" width="6" height="10" viewBox="0 0 6 10"><path d="M.8 .8L5 5L.8 9.2" fill="none" stroke="#a2a2a2" stroke-width="1.5"/></svg>
<svg class="a" style="left:42px;top:317px;" width="17" height="14" viewBox="0 0 17 14"><path d="M.8 13.2V3.2C.8 2.6 1.2 2.2 1.8 2.2H8.5L10 .8H14.5C15.3 .8 15.8 1.3 15.8 2V13.2Z" fill="url(#gf)" stroke="#cfa955" stroke-width=".8"/><path d="M10.5 1.3H14.5V3H10.5Z" fill="#fff"/><path d="M12.3 1.2H15V2.6H12.3Z" fill="#3ba6e6"/><path d="M1 4.3H15.6" stroke="#f6e3a6" stroke-width=".8"/></svg>
<div class="a" style="left:62px;top:318px;width:13px;height:13px;background:#fff;border:1px solid #9a9a9a;box-sizing:border-box;"></div>
<span class="t" style="left:81px;top:318px;font-size:12px;line-height:12px;color:#111;letter-spacing:-0.194px;">60_Wartung</span>
<svg class="a" style="left:21px;top:337px;" width="6" height="10" viewBox="0 0 6 10"><path d="M.8 .8L5 5L.8 9.2" fill="none" stroke="#a2a2a2" stroke-width="1.5"/></svg>
<svg class="a" style="left:42px;top:335px;" width="17" height="14" viewBox="0 0 17 14"><path d="M.8 13.2V3.2C.8 2.6 1.2 2.2 1.8 2.2H8.5L10 .8H14.5C15.3 .8 15.8 1.3 15.8 2V13.2Z" fill="url(#gf)" stroke="#cfa955" stroke-width=".8"/><path d="M10.5 1.3H14.5V3H10.5Z" fill="#fff"/><path d="M12.3 1.2H15V2.6H12.3Z" fill="#3ba6e6"/><path d="M1 4.3H15.6" stroke="#f6e3a6" stroke-width=".8"/></svg>
<div class="a" style="left:62px;top:336px;width:13px;height:13px;background:#fff;border:1px solid #9a9a9a;box-sizing:border-box;"></div>
<span class="t" style="left:81px;top:336px;font-size:12px;line-height:12px;color:#111;letter-spacing:-0.430px;">70_Diagnose</span>
<svg class="a" style="left:21px;top:355px;" width="6" height="10" viewBox="0 0 6 10"><path d="M.8 .8L5 5L.8 9.2" fill="none" stroke="#a2a2a2" stroke-width="1.5"/></svg>
<svg class="a" style="left:42px;top:353px;" width="17" height="14" viewBox="0 0 17 14"><path d="M.8 13.2V3.2C.8 2.6 1.2 2.2 1.8 2.2H8.5L10 .8H14.5C15.3 .8 15.8 1.3 15.8 2V13.2Z" fill="url(#gf)" stroke="#cfa955" stroke-width=".8"/><path d="M10.5 1.3H14.5V3H10.5Z" fill="#fff"/><path d="M12.3 1.2H15V2.6H12.3Z" fill="#3ba6e6"/><path d="M1 4.3H15.6" stroke="#f6e3a6" stroke-width=".8"/></svg>
<div class="a" style="left:62px;top:354px;width:13px;height:13px;background:#fff;border:1px solid #9a9a9a;box-sizing:border-box;"></div>
<span class="t" style="left:81px;top:354px;font-size:12px;line-height:12px;color:#111;letter-spacing:-0.272px;">80_Kontakt</span>
<svg class="a" style="left:21px;top:373px;" width="6" height="10" viewBox="0 0 6 10"><path d="M.8 .8L5 5L.8 9.2" fill="none" stroke="#a2a2a2" stroke-width="1.5"/></svg>
<svg class="a" style="left:42px;top:371px;" width="17" height="14" viewBox="0 0 17 14"><path d="M.8 13.2V3.2C.8 2.6 1.2 2.2 1.8 2.2H8.5L10 .8H14.5C15.3 .8 15.8 1.3 15.8 2V13.2Z" fill="url(#gf)" stroke="#cfa955" stroke-width=".8"/><path d="M10.5 1.3H14.5V3H10.5Z" fill="#fff"/><path d="M12.3 1.2H15V2.6H12.3Z" fill="#3ba6e6"/><path d="M1 4.3H15.6" stroke="#f6e3a6" stroke-width=".8"/></svg>
<div class="a" style="left:62px;top:372px;width:13px;height:13px;background:#fff;border:1px solid #9a9a9a;box-sizing:border-box;"></div>
<span class="t" style="left:81px;top:372px;font-size:12px;line-height:12px;color:#111;letter-spacing:-0.262px;">90_Entsorgung</span>
<svg class="a" style="left:21px;top:391px;" width="6" height="10" viewBox="0 0 6 10"><path d="M.8 .8L5 5L.8 9.2" fill="none" stroke="#a2a2a2" stroke-width="1.5"/></svg>
<svg class="a" style="left:42px;top:389px;" width="17" height="14" viewBox="0 0 17 14"><path d="M.8 13.2V3.2C.8 2.6 1.2 2.2 1.8 2.2H8.5L10 .8H14.5C15.3 .8 15.8 1.3 15.8 2V13.2Z" fill="url(#gf)" stroke="#cfa955" stroke-width=".8"/><path d="M10.5 1.3H14.5V3H10.5Z" fill="#fff"/><path d="M12.3 1.2H15V2.6H12.3Z" fill="#3ba6e6"/><path d="M1 4.3H15.6" stroke="#f6e3a6" stroke-width=".8"/></svg>
<div class="a" style="left:62px;top:390px;width:13px;height:13px;background:#fff;border:1px solid #9a9a9a;box-sizing:border-box;"></div>
<span class="t" style="left:81px;top:390px;font-size:12px;line-height:12px;color:#111;letter-spacing:-0.373px;">Resources</span>
<div class="a" style="left:3px;top:712px;width:350px;height:1px;background:#9f9f9f;"></div>
<div class="a" style="left:3px;top:713px;width:350px;height:39px;background:#f0f0f0;"></div>
<svg class="a" style="left:8px;top:718px;" width="30" height="30" viewBox="0 0 20 20"><circle cx="10" cy="10" r="10" fill="#4caf50"/><path d="M10 10L1.34 5A10 10 0 0 1 18.66 5Z" fill="#e53935"/><path d="M10 10L18.66 5A10 10 0 0 1 5 18.66Z" fill="#fdd835"/><path d="M10 10L5 18.66A10 10 0 0 1 1.34 5Z" fill="#43a047"/><path d="M10 5.5H18.9A10 10 0 0 0 1.34 5L5.6 12Z" fill="#e53935"/><circle cx="10" cy="10" r="4.6" fill="#fff"/><circle cx="10" cy="10" r="3.6" fill="#4285f4"/></svg>
<span class="t" style="left:42px;top:719px;font-size:12px;line-height:12px;color:#111;letter-spacing:-0.298px;">sich_allgsich_ges</span>
<span class="t" style="left:42px;top:736px;font-size:12px;line-height:12px;color:#7a7a7a;letter-spacing:0.037px;">Chrome HTML Document</span>
<span class="t" style="left:186.6px;top:719px;font-size:12px;line-height:12px;color:#7a7a7a;letter-spacing:-0.298px;">Geändert am:</span>
<span class="t" style="left:222.4px;top:736px;font-size:12px;line-height:12px;color:#7a7a7a;letter-spacing:-0.624px;">Größe:</span>
<span class="t" style="left:264px;top:719px;font-size:12px;line-height:12px;color:#111;letter-spacing:-0.534px;">26.04.2021 15:...</span>
<span class="t" style="left:264px;top:736px;font-size:12px;line-height:12px;color:#111;letter-spacing:-0.758px;">5,27 KB</span>
<div class="a" style="left:3px;top:752px;width:350px;height:31px;background:#ececec;"></div>
<svg class="a" style="left:12px;top:760px;" width="16" height="16" viewBox="0 0 16 16"><circle cx="8" cy="8" r="7.4" fill="#def3ee" stroke="#8fcfc0" stroke-width="1.1"/><circle cx="8" cy="8" r="4.5" fill="none" stroke="#8fcfc0" stroke-width="1.2" stroke-dasharray="2 1.3"/><circle cx="8" cy="8" r="1.8" fill="#a9dcd0"/></svg>
<span class="t" style="left:37.4px;top:763px;font-size:12px;line-height:12px;color:#5a5a5a;font-weight:bold;letter-spacing:-0.126px;">MadCap Central</span>
<svg class="a" style="left:331px;top:762px;" width="15" height="13" viewBox="0 0 15 13"><rect x="0" y="0" width="15" height="1" fill="#555"/><rect x="0" y="4" width="15" height="1" fill="#555"/><rect x="0" y="8" width="15" height="1" fill="#555"/><rect x="0" y="12" width="15" height="1" fill="#555"/></svg>
<div class="a" style="left:3px;top:783px;width:350px;height:30px;background:#848484;"></div>
<svg class="a" style="left:12px;top:790px;" width="16" height="16" viewBox="0 0 16 16"><path d="M.8 14V3H5.5L7 1.5H14.5V14Z" fill="#e9c877" stroke="#cfa955" stroke-width=".8"/><path d="M9.5 2H13.5V3.6H9.5Z" fill="#fff"/><circle cx="7.5" cy="9" r="3.6" fill="#e8e8f0" stroke="#999" stroke-width="1"/><path d="M10 11.5L13 14.5" stroke="#888" stroke-width="1.6"/></svg>
<span class="t" style="left:37px;top:794px;font-size:12px;line-height:12px;color:#ffffff;font-weight:bold;letter-spacing:-0.096px;">Content Explorer</span>
<svg class="a" style="left:331px;top:792px;" width="15" height="13" viewBox="0 0 15 13"><rect x="0" y="0" width="15" height="1" fill="#f4f4f4"/><rect x="0" y="4" width="15" height="1" fill="#f4f4f4"/><rect x="0" y="8" width="15" height="1" fill="#f4f4f4"/><rect x="0" y="12" width="15" height="1" fill="#f4f4f4"/></svg>
<div class="a" style="left:1259px;top:119px;width:300px;height:698px;background:#5f5f5f;"></div>
<div class="a" style="left:1263px;top:119px;width:294px;height:21px;background:#00627a;"></div>
<svg class="a" style="left:1268px;top:123px;" width="15" height="13" viewBox="0 0 15 13"><rect x="0" y="0" width="15" height="1" fill="#ffffff"/><rect x="0" y="4" width="15" height="1" fill="#ffffff"/><rect x="0" y="8" width="15" height="1" fill="#ffffff"/><rect x="0" y="12" width="15" height="1" fill="#ffffff"/></svg>
<span class="t" style="left:1288px;top:124px;font-size:12px;line-height:12px;color:#ffffff;font-weight:bold;letter-spacing:-0.090px;">Project Organizer</span>
<svg class="a" style="left:1508.5px;top:127px;" width="9" height="5" viewBox="0 0 9 5"><path d="M0 0H9L4.5 5Z" fill="#ffffff"/></svg>
<svg class="a" style="left:1527.0px;top:123px;" width="7" height="12" viewBox="0 0 7 12"><path d="M1.5 .7H5.5V6H1.5ZM0 6.2H7M3.5 6.2V11.5" fill="none" stroke="#ffffff" stroke-width="1.2"/><path d="M4.8 1V6" stroke="#ffffff" stroke-width="1"/></svg>
<svg class="a" style="left:1543px;top:125px;" width="8" height="8" viewBox="0 0 8 8"><path d="M.5 .5L7.5 7.5M7.5 .5L.5 7.5" stroke="#ffffff" stroke-width="1.2"/></svg>
<div class="a" style="left:1263px;top:140px;width:294px;height:25px;background:linear-gradient(#fdfdfd,#f0f0f0);"></div>
<div class="a" style="left:1263px;top:141px;width:23px;height:22px;background:#f4f9ff;border:1px solid #1f7fd8;box-sizing:border-box;"></div>
<svg class="a" style="left:1266px;top:145px;" width="17" height="14" viewBox="0 0 17 14"><path d="M.8 13.2V3.2C.8 2.6 1.2 2.2 1.8 2.2H8.5L10 .8H14.5C15.3 .8 15.8 1.3 15.8 2V13.2Z" fill="url(#gf)" stroke="#cfa955" stroke-width=".8"/><path d="M10.5 1.3H14.5V3H10.5Z" fill="#fff"/><path d="M12.3 1.2H15V2.6H12.3Z" fill="#3ba6e6"/><path d="M1 4.3H15.6" stroke="#f6e3a6" stroke-width=".8"/></svg>
<svg class="a" style="left:1290px;top:145px;" width="15" height="15" viewBox="0 0 15 15"><rect x=".5" y=".5" width="13.5" height="13.5" rx="1.5" fill="#cfd8fb" stroke="#4a66e0"/><rect x="1" y="1" width="12.5" height="2.6" fill="#b8b8c8"/><path d="M1 7H14M1 10.5H14M5 4V14M9.5 4V14" stroke="#eef1ff" stroke-width=".9"/></svg>
<div class="a" style="left:1312px;top:145px;width:1px;height:17px;background:#b9b9b9;"></div>
<svg class="a" style="left:1317.5px;top:144px;" width="16" height="16" viewBox="0 0 16 16"><rect x=".5" y=".5" width="9.5" height="9.5" rx=".8" fill="#fff" stroke="#3555e0"/><rect x="3" y="3" width="9.5" height="9.5" rx=".8" fill="#fff" stroke="#3555e0"/><rect x="5.5" y="5.5" width="10" height="10" rx=".8" fill="#fff" stroke="#3555e0"/><path d="M7.8 10.5H13.2M10.5 7.8V13.2" stroke="#3555e0" stroke-width="1.1"/></svg>
<svg class="a" style="left:1340.5px;top:144px;" width="16" height="16" viewBox="0 0 16 16"><rect x=".5" y=".5" width="9.5" height="9.5" rx=".8" fill="#fff" stroke="#3555e0"/><rect x="3" y="3" width="9.5" height="9.5" rx=".8" fill="#fff" stroke="#3555e0"/><rect x="5.5" y="5.5" width="10" height="10" rx=".8" fill="#fff" stroke="#3555e0"/><path d="M7.8 10.5H13.2" stroke="#3555e0" stroke-width="1.1"/></svg>
<div class="a" style="left:1361px;top:141px;width:23px;height:22px;background:#f4f9ff;border:1px solid #1f7fd8;box-sizing:border-box;"></div>
<svg class="a" style="left:1365px;top:144.5px;" width="15" height="15" viewBox="0 0 15 15"><rect x=".6" y=".6" width="13.8" height="13.8" rx="1.5" fill="#f4f4f4" stroke="#333" stroke-width="1.1"/><rect x="2.4" y="2.4" width="4.4" height="4.4" fill="#f0606a"/><rect x="8.2" y="2.4" width="4.4" height="4.4" fill="#f5b932"/><rect x="2.4" y="8.2" width="4.4" height="4.4" fill="#5bc45b"/><rect x="8.2" y="8.2" width="4.4" height="4.4" fill="#5b9bf0"/></svg>
<div class="a" style="left:1387px;top:145px;width:1px;height:17px;background:#b9b9b9;"></div>
<svg class="a" style="left:1392px;top:144px;" width="17" height="16" viewBox="0 0 17 16"><path d="M1 15V2.5H6L7.5 1H12V5H16V15Z" fill="#d4d4d4" stroke="#c4c4c4" stroke-width=".6"/><path d="M4 14L8 9H6.5L10 5L13.5 9H12L9 14Z" fill="#9c9c9c"/></svg>
<svg class="a" style="left:1416px;top:144px;" width="16" height="16" viewBox="0 0 16 16"><circle cx="8" cy="8" r="7.4" fill="#3d5bd9" stroke="#9aa0b8" stroke-width="1.1"/><path d="M4 7.5C4.5 4.5 9 3.5 11 6L12.3 4.7V8.5H8.5L9.9 7.1C8.5 5.3 5.8 6 5.5 7.8Z" fill="#e6ebff"/><path d="M12 8.5C11.5 11.5 7 12.5 5 10L3.7 11.3V7.5H7.5L6.1 8.9C7.5 10.7 10.2 10 10.5 8.2Z" fill="#e6ebff"/></svg>
<div class="a" style="left:1439px;top:145px;width:1px;height:17px;background:#b9b9b9;"></div>
<svg class="a" style="left:1444px;top:143px;" width="18" height="17" viewBox="0 0 18 17"><path d="M.8 16V6H6L7.5 4.5H16.5V16Z" fill="#d6d6d6" stroke="#c6c6c6" stroke-width=".8"/><path d="M0 3.5H7M3.5 0V7" stroke="#b4b4b4" stroke-width="2.2"/></svg>
<div class="a" style="left:1263px;top:165px;width:294px;height:1px;background:#a9a9a9;"></div>
<div class="a" style="left:1263px;top:166px;width:294px;height:546px;background:#ffffff;"></div>
<div class="a" style="left:1556px;top:166px;width:1px;height:546px;background:#bdbdbd;"></div>
<div class="a" style="left:1263px;top:166px;width:1px;height:546px;background:#c8c8c8;"></div>
<div class="a" style="left:1281px;top:167px;width:83px;height:18px;background:#d9d9d9;"></div>
<svg class="a" style="left:1283.5px;top:168px;" width="14.5" height="15" viewBox="0 0 16 15.5"><path d="M5 3.5V1.5C5 1 5.4 .6 6 .6H10C10.6 .6 11 1 11 1.5V3.5" fill="none" stroke="#7a3d1c" stroke-width="1.2"/><rect x=".5" y="3.5" width="15" height="11" rx="1.5" fill="#b5622f" stroke="#8a4520" stroke-width=".8"/><rect x=".5" y="3.5" width="15" height="4.5" rx="1.5" fill="#c9773f"/><rect x="6.5" y="7.5" width="3" height="2.6" fill="#f0d9a0" stroke="#7a3d1c" stroke-width=".5"/></svg>
<div class="a" style="left:1303px;top:170px;width:13px;height:13px;background:#e4e4e4;border:1px solid #9a9a9a;box-sizing:border-box;"></div>
<span class="t" style="left:1322.4px;top:170px;font-size:12px;line-height:12px;color:#111;letter-spacing:-0.051px;">Projekt</span>
<svg class="a" style="left:1282.5px;top:189px;" width="6" height="10" viewBox="0 0 6 10"><path d="M.8 .8L5 5L.8 9.2" fill="none" stroke="#a2a2a2" stroke-width="1.5"/></svg>
<svg class="a" style="left:1302px;top:187px;" width="17" height="14" viewBox="0 0 17 14"><path d="M.8 13.2V3.2C.8 2.6 1.2 2.2 1.8 2.2H8.5L10 .8H14.5C15.3 .8 15.8 1.3 15.8 2V13.2Z" fill="url(#gf)" stroke="#cfa955" stroke-width=".8"/><path d="M10.5 1.3H14.5V3H10.5Z" fill="#fff"/><path d="M12.3 1.2H15V2.6H12.3Z" fill="#3ba6e6"/><path d="M1 4.3H15.6" stroke="#f6e3a6" stroke-width=".8"/></svg>
<div class="a" style="left:1322px;top:188px;width:13px;height:13px;background:#fff;border:1px solid #9a9a9a;box-sizing:border-box;"></div>
<span class="t" style="left:1341.6px;top:188px;font-size:12px;line-height:12px;color:#111;letter-spacing:-0.205px;">Erweitert</span>
<svg class="a" style="left:1282.5px;top:207px;" width="6" height="10" viewBox="0 0 6 10"><path d="M.8 .8L5 5L.8 9.2" fill="none" stroke="#a2a2a2" stroke-width="1.5"/></svg>
<svg class="a" style="left:1302px;top:205px;" width="17" height="14" viewBox="0 0 17 14"><path d="M.8 13.2V3.2C.8 2.6 1.2 2.2 1.8 2.2H8.5L10 .8H14.5C15.3 .8 15.8 1.3 15.8 2V13.2Z" fill="url(#gf)" stroke="#cfa955" stroke-width=".8"/><path d="M10.5 1.3H14.5V3H10.5Z" fill="#fff"/><path d="M12.3 1.2H15V2.6H12.3Z" fill="#3ba6e6"/><path d="M1 4.3H15.6" stroke="#f6e3a6" stroke-width=".8"/></svg>
<div class="a" style="left:1322px;top:206px;width:13px;height:13px;background:#fff;border:1px solid #9a9a9a;box-sizing:border-box;"></div>
<span class="t" style="left:1341.6px;top:206px;font-size:12px;line-height:12px;color:#111;letter-spacing:-0.143px;">Bedingter Text</span>
<svg class="a" style="left:1282.5px;top:225px;" width="6" height="10" viewBox="0 0 6 10"><path d="M.8 .8L5 5L.8 9.2" fill="none" stroke="#a2a2a2" stroke-width="1.5"/></svg>
<svg class="a" style="left:1302px;top:223px;" width="17" height="14" viewBox="0 0 17 14"><path d="M.8 13.2V3.2C.8 2.6 1.2 2.2 1.8 2.2H8.5L10 .8H14.5C15.3 .8 15.8 1.3 15.8 2V13.2Z" fill="url(#gf)" stroke="#cfa955" stroke-width=".8"/><path d="M10.5 1.3H14.5V3H10.5Z" fill="#fff"/><path d="M12.3 1.2H15V2.6H12.3Z" fill="#3ba6e6"/><path d="M1 4.3H15.6" stroke="#f6e3a6" stroke-width=".8"/></svg>
<div class="a" style="left:1322px;top:224px;width:13px;height:13px;background:#fff;border:1px solid #9a9a9a;box-sizing:border-box;"></div>
<span class="t" style="left:1341.6px;top:224px;font-size:12px;line-height:12px;color:#111;letter-spacing:-0.350px;">Zieladressen</span>
<svg class="a" style="left:1282.5px;top:243px;" width="6" height="10" viewBox="0 0 6 10"><path d="M.8 .8L5 5L.8 9.2" fill="none" stroke="#a2a2a2" stroke-width="1.5"/></svg>
<svg class="a" style="left:1302px;top:241px;" width="17" height="14" viewBox="0 0 17 14"><path d="M.8 13.2V3.2C.8 2.6 1.2 2.2 1.8 2.2H8.5L10 .8H14.5C15.3 .8 15.8 1.3 15.8 2V13.2Z" fill="url(#gf)" stroke="#cfa955" stroke-width=".8"/><path d="M10.5 1.3H14.5V3H10.5Z" fill="#fff"/><path d="M12.3 1.2H15V2.6H12.3Z" fill="#3ba6e6"/><path d="M1 4.3H15.6" stroke="#f6e3a6" stroke-width=".8"/></svg>
<div class="a" style="left:1322px;top:242px;width:13px;height:13px;background:#fff;border:1px solid #9a9a9a;box-sizing:border-box;"></div>
<span class="t" style="left:1341.6px;top:242px;font-size:12px;line-height:12px;color:#111;letter-spacing:-0.194px;">Exporte</span>
<svg class="a" style="left:1282.5px;top:261px;" width="6" height="10" viewBox="0 0 6 10"><path d="M.8 .8L5 5L.8 9.2" fill="none" stroke="#a2a2a2" stroke-width="1.5"/></svg>
<svg class="a" style="left:1302px;top:259px;" width="17" height="14" viewBox="0 0 17 14"><path d="M.8 13.2V3.2C.8 2.6 1.2 2.2 1.8 2.2H8.5L10 .8H14.5C15.3 .8 15.8 1.3 15.8 2V13.2Z" fill="url(#gf)" stroke="#cfa955" stroke-width=".8"/><path d="M10.5 1.3H14.5V3H10.5Z" fill="#fff"/><path d="M12.3 1.2H15V2.6H12.3Z" fill="#3ba6e6"/><path d="M1 4.3H15.6" stroke="#f6e3a6" stroke-width=".8"/></svg>
<div class="a" style="left:1322px;top:260px;width:13px;height:13px;background:#fff;border:1px solid #9a9a9a;box-sizing:border-box;"></div>
<span class="t" style="left:1341.6px;top:260px;font-size:12px;line-height:12px;color:#111;letter-spacing:-0.504px;">Glossare</span>
<svg class="a" style="left:1282.5px;top:279px;" width="6" height="10" viewBox="0 0 6 10"><path d="M.8 .8L5 5L.8 9.2" fill="none" stroke="#a2a2a2" stroke-width="1.5"/></svg>
<svg class="a" style="left:1302px;top:277px;" width="17" height="14" viewBox="0 0 17 14"><path d="M.8 13.2V3.2C.8 2.6 1.2 2.2 1.8 2.2H8.5L10 .8H14.5C15.3 .8 15.8 1.3 15.8 2V13.2Z" fill="url(#gf)" stroke="#cfa955" stroke-width=".8"/><path d="M10.5 1.3H14.5V3H10.5Z" fill="#fff"/><path d="M12.3 1.2H15V2.6H12.3Z" fill="#3ba6e6"/><path d="M1 4.3H15.6" stroke="#f6e3a6" stroke-width=".8"/></svg>
<div class="a" style="left:1322px;top:278px;width:13px;height:13px;background:#fff;border:1px solid #9a9a9a;box-sizing:border-box;"></div>
<span class="t" style="left:1341.6px;top:278px;font-size:12px;line-height:12px;color:#111;letter-spacing:0.188px;">Importe</span>
<svg class="a" style="left:1282.5px;top:297px;" width="6" height="10" viewBox="0 0 6 10"><path d="M.8 .8L5 5L.8 9.2" fill="none" stroke="#a2a2a2" stroke-width="1.5"/></svg>
<svg class="a" style="left:1302px;top:295px;" width="17" height="14" viewBox="0 0 17 14"><path d="M.8 13.2V3.2C.8 2.6 1.2 2.2 1.8 2.2H8.5L10 .8H14.5C15.3 .8 15.8 1.3 15.8 2V13.2Z" fill="url(#gf)" stroke="#cfa955" stroke-width=".8"/><path d="M10.5 1.3H14.5V3H10.5Z" fill="#fff"/><path d="M12.3 1.2H15V2.6H12.3Z" fill="#3ba6e6"/><path d="M1 4.3H15.6" stroke="#f6e3a6" stroke-width=".8"/></svg>
<div class="a" style="left:1322px;top:296px;width:13px;height:13px;background:#fff;border:1px solid #9a9a9a;box-sizing:border-box;"></div>
<span class="t" style="left:1341.6px;top:296px;font-size:12px;line-height:12px;color:#111;letter-spacing:-0.129px;">Berichte</span>
<svg class="a" style="left:1282.5px;top:315px;" width="6" height="10" viewBox="0 0 6 10"><path d="M.8 .8L5 5L.8 9.2" fill="none" stroke="#a2a2a2" stroke-width="1.5"/></svg>
<svg class="a" style="left:1302px;top:313px;" width="17" height="14" viewBox="0 0 17 14"><path d="M.8 13.2V3.2C.8 2.6 1.2 2.2 1.8 2.2H8.5L10 .8H14.5C15.3 .8 15.8 1.3 15.8 2V13.2Z" fill="url(#gf)" stroke="#cfa955" stroke-width=".8"/><path d="M10.5 1.3H14.5V3H10.5Z" fill="#fff"/><path d="M12.3 1.2H15V2.6H12.3Z" fill="#3ba6e6"/><path d="M1 4.3H15.6" stroke="#f6e3a6" stroke-width=".8"/></svg>
<div class="a" style="left:1322px;top:314px;width:13px;height:13px;background:#fff;border:1px solid #9a9a9a;box-sizing:border-box;"></div>
<span class="t" style="left:1341.6px;top:314px;font-size:12px;line-height:12px;color:#111;letter-spacing:-0.469px;">Skins</span>
<svg class="a" style="left:1282.5px;top:333px;" width="6" height="10" viewBox="0 0 6 10"><path d="M.8 .8L5 5L.8 9.2" fill="none" stroke="#a2a2a2" stroke-width="1.5"/></svg>
<svg class="a" style="left:1302px;top:331px;" width="17" height="14" viewBox="0 0 17 14"><path d="M.8 13.2V3.2C.8 2.6 1.2 2.2 1.8 2.2H8.5L10 .8H14.5C15.3 .8 15.8 1.3 15.8 2V13.2Z" fill="url(#gf)" stroke="#cfa955" stroke-width=".8"/><path d="M10.5 1.3H14.5V3H10.5Z" fill="#fff"/><path d="M12.3 1.2H15V2.6H12.3Z" fill="#3ba6e6"/><path d="M1 4.3H15.6" stroke="#f6e3a6" stroke-width=".8"/></svg>
<div class="a" style="left:1322px;top:332px;width:13px;height:13px;background:#fff;border:1px solid #9a9a9a;box-sizing:border-box;"></div>
<span class="t" style="left:1341.6px;top:332px;font-size:12px;line-height:12px;color:#111;letter-spacing:-0.337px;">Targets</span>
<svg class="a" style="left:1282.5px;top:351px;" width="6" height="10" viewBox="0 0 6 10"><path d="M.8 .8L5 5L.8 9.2" fill="none" stroke="#a2a2a2" stroke-width="1.5"/></svg>
<svg class="a" style="left:1302px;top:349px;" width="17" height="14" viewBox="0 0 17 14"><path d="M.8 13.2V3.2C.8 2.6 1.2 2.2 1.8 2.2H8.5L10 .8H14.5C15.3 .8 15.8 1.3 15.8 2V13.2Z" fill="url(#gf)" stroke="#cfa955" stroke-width=".8"/><path d="M10.5 1.3H14.5V3H10.5Z" fill="#fff"/><path d="M12.3 1.2H15V2.6H12.3Z" fill="#3ba6e6"/><path d="M1 4.3H15.6" stroke="#f6e3a6" stroke-width=".8"/></svg>
<div class="a" style="left:1322px;top:350px;width:13px;height:13px;background:#fff;border:1px solid #9a9a9a;box-sizing:border-box;"></div>
<span class="t" style="left:1341.6px;top:350px;font-size:12px;line-height:12px;color:#111;letter-spacing:-0.203px;">Inhaltsverzeichnisse</span>
<svg class="a" style="left:1282.5px;top:369px;" width="6" height="10" viewBox="0 0 6 10"><path d="M.8 .8L5 5L.8 9.2" fill="none" stroke="#a2a2a2" stroke-width="1.5"/></svg>
<svg class="a" style="left:1302px;top:367px;" width="17" height="14" viewBox="0 0 17 14"><path d="M.8 13.2V3.2C.8 2.6 1.2 2.2 1.8 2.2H8.5L10 .8H14.5C15.3 .8 15.8 1.3 15.8 2V13.2Z" fill="url(#gf)" stroke="#cfa955" stroke-width=".8"/><path d="M10.5 1.3H14.5V3H10.5Z" fill="#fff"/><path d="M12.3 1.2H15V2.6H12.3Z" fill="#3ba6e6"/><path d="M1 4.3H15.6" stroke="#f6e3a6" stroke-width=".8"/></svg>
<div class="a" style="left:1322px;top:368px;width:13px;height:13px;background:#fff;border:1px solid #9a9a9a;box-sizing:border-box;"></div>
<span class="t" style="left:1341.6px;top:368px;font-size:12px;line-height:12px;color:#111;letter-spacing:-0.257px;">Variablen</span>
<div class="a" style="left:1263px;top:712px;width:294px;height:1px;background:#9f9f9f;"></div>
<div class="a" style="left:1263px;top:713px;width:294px;height:39px;background:#f0f0f0;"></div>
<svg class="a" style="left:1272px;top:720px;" width="19" height="28" viewBox="0 0 19 28"><path d="M.5 1.5L8 .5V22L.5 22.5Z" fill="#f5d67a"/><path d="M4.5 3H17.5V22H4.5Z" fill="#fbe7a2"/><path d="M.5 1.5L4.5 3V27L.5 22.5Z" fill="#eec55a"/></svg>
<span class="t" style="left:1302.4px;top:719px;font-size:12px;line-height:12px;color:#111;letter-spacing:-0.123px;">Project</span>
<span class="t" style="left:1302.4px;top:735px;font-size:12px;line-height:12px;color:#7a7a7a;letter-spacing:-0.118px;">Dateiordner</span>
<span class="t" style="left:1371.6px;top:719px;font-size:12px;line-height:12px;color:#7a7a7a;letter-spacing:-0.315px;">Geändert am:</span>
<span class="t" style="left:1449px;top:719px;font-size:12px;line-height:12px;color:#111;letter-spacing:-0.585px;">27.01.2020 08:14:08</span>
<div class="a" style="left:1263px;top:752px;width:294px;height:31px;background:#ececec;"></div>
<svg class="a" style="left:1272px;top:762px;" width="17" height="13" viewBox="0 0 17 13"><rect x=".5" y=".5" width="16" height="12" rx="1.5" fill="#eef6f8" stroke="#c4c4c4"/><rect x="1" y="1" width="15" height="2.4" fill="#d9d9d9"/><text x="2.5" y="11" font-family="Liberation Sans" font-size="8.5" fill="#aaa">A</text><text x="8" y="11" font-family="Liberation Serif" font-weight="bold" font-size="8.5" fill="#6cc4f0">A</text></svg>
<span class="t" style="left:1297.5px;top:763px;font-size:12px;line-height:12px;color:#5a5a5a;font-weight:bold;letter-spacing:-0.163px;">Formate</span>
<svg class="a" style="left:1535px;top:762px;" width="15" height="13" viewBox="0 0 15 13"><rect x="0" y="0" width="15" height="1" fill="#555"/><rect x="0" y="4" width="15" height="1" fill="#555"/><rect x="0" y="8" width="15" height="1" fill="#555"/><rect x="0" y="12" width="15" height="1" fill="#555"/></svg>
<div class="a" style="left:1263px;top:783px;width:294px;height:30px;background:#848484;"></div>
<svg class="a" style="left:1272px;top:790px;" width="17" height="16" viewBox="0 0 17 16"><path d="M.8 15V3H6L7.5 1.5H15.5V15Z" fill="#f0d384" stroke="#cfa955" stroke-width=".8"/><path d="M10 2H14.5V3.6H10Z" fill="#5bb8f0"/><path d="M.8 15L2.5 6H16.5L15.5 15Z" fill="#f7e1a0" stroke="#cfa955" stroke-width=".8"/><rect x="5" y="9.5" width="7" height="5.5" fill="#e0e0e0" stroke="#999" stroke-width=".7"/></svg>
<span class="t" style="left:1297.5px;top:794px;font-size:12px;line-height:12px;color:#ffffff;font-weight:bold;letter-spacing:-0.125px;">Project Organizer</span>
<svg class="a" style="left:1535px;top:792px;" width="15" height="13" viewBox="0 0 15 13"><rect x="0" y="0" width="15" height="1" fill="#f4f4f4"/><rect x="0" y="4" width="15" height="1" fill="#f4f4f4"/><rect x="0" y="8" width="15" height="1" fill="#f4f4f4"/><rect x="0" y="12" width="15" height="1" fill="#f4f4f4"/></svg>
<div class="a" style="left:357px;top:119px;width:902px;height:21px;background:#ececec;"></div>
<svg class="a" style="left:362px;top:123px;" width="15" height="13" viewBox="0 0 15 13"><rect x="0" y="0" width="15" height="1" fill="#555"/><rect x="0" y="4" width="15" height="1" fill="#555"/><rect x="0" y="8" width="15" height="1" fill="#555"/><rect x="0" y="12" width="15" height="1" fill="#555"/></svg>
<span class="t" style="left:381.7px;top:124px;font-size:12px;line-height:12px;color:#666;font-weight:bold;letter-spacing:-0.417px;">sich_allgsich_ges.htm</span>
<svg class="a" style="left:1210.5px;top:127px;" width="9" height="5" viewBox="0 0 9 5"><path d="M0 0H9L4.5 5Z" fill="#555"/></svg>
<svg class="a" style="left:1228.5px;top:123px;" width="7" height="12" viewBox="0 0 7 12"><path d="M1.5 .7H5.5V6H1.5ZM0 6.2H7M3.5 6.2V11.5" fill="none" stroke="#555" stroke-width="1.2"/><path d="M4.8 1V6" stroke="#555" stroke-width="1"/></svg>
<svg class="a" style="left:1245px;top:125px;" width="8" height="8" viewBox="0 0 8 8"><path d="M.5 .5L7.5 7.5M7.5 .5L.5 7.5" stroke="#555" stroke-width="1.2"/></svg>
<div class="a" style="left:357px;top:140px;width:902px;height:23px;background:#ffffff;"></div>
<div class="a" style="left:357px;top:161px;width:902px;height:1px;background:#b4b4b4;"></div>
<div class="a" style="left:357px;top:162px;width:902px;height:1px;background:#dcdcdc;"></div>
<svg class="a" style="left:357px;top:140px;" width="320" height="23" viewBox="0 0 320 23"><defs><linearGradient id="gtab" x1="0" y1="0" x2="0" y2="1"><stop offset="0" stop-color="#e6e6e6"/><stop offset="1" stop-color="#cdcdcd"/></linearGradient></defs>
<path d="M176 22C186 22 188 1.5 200 1.5H284C296 1.5 298 22 310 22Z" fill="url(#gtab)" stroke="#a9a9a9" stroke-width="1"/>
<path d="M0 22C9 21 10 1.5 20 1.5H178C189 1.5 190 22 200 22.5V23H0Z" fill="#ffffff"/>
<path d="M0 21.5C9 21 10 1.5 20 1.5H178C189 1.5 190 21.5 200 21.5" fill="none" stroke="#9a9a9a" stroke-width="1"/></svg>
<svg class="a" style="left:378px;top:144px;" width="13" height="16" viewBox="0 0 13 16"><path d="M2.5 .5H8.5L12.5 4.5V14.5H2.5Z" fill="#eef4f4" stroke="#9aa8a8" stroke-width=".8"/><path d="M4.5 4H8M4.5 6.5H10" stroke="#8aa" stroke-width=".8"/><rect x="0" y="10.5" width="11" height="3.4" fill="#f8c81c"/></svg>
<span class="t" style="left:400px;top:147px;font-size:12px;line-height:12px;color:#111;letter-spacing:-0.305px;">sich_allgsich_ges.htm</span>
<svg class="a" style="left:523px;top:149.5px;" width="7" height="7" viewBox="0 0 7 7"><path d="M.5 .5L6.5 6.5M6.5 .5L.5 6.5" stroke="#6a6a6a" stroke-width="1"/></svg>
<svg class="a" style="left:556px;top:146px;" width="16" height="12" viewBox="0 0 16 12"><rect x=".5" y=".5" width="15" height="11" rx="1" fill="#d3e6f4" stroke="#c4c4c4"/><rect x="1" y="1" width="5.5" height="10" fill="#a9cdea"/><path d="M2.5 3.5L5.5 6L2.5 8.5Z" fill="#eef6fc"/></svg>
<span class="t" style="left:577.5px;top:147px;font-size:12px;line-height:12px;color:#666;letter-spacing:-0.170px;">Startseite</span>
<svg class="a" style="left:638px;top:149.5px;" width="7" height="7" viewBox="0 0 7 7"><path d="M.5 .5L6.5 6.5M6.5 .5L.5 6.5" stroke="#6a6a6a" stroke-width="1"/></svg>
<div class="a" style="left:1242px;top:140px;width:17px;height:21px;background:#eeeeee;"></div>
<div class="a" style="left:1242px;top:140px;width:1px;height:21px;background:#c8c8c8;"></div>
<svg class="a" style="left:1245px;top:145px;" width="11" height="12" viewBox="0 0 11 12"><path d="M0 .5H11M0 3H11M0 5.5H11" stroke="#9a9a9a" stroke-width="1.1"/><path d="M1 8H10L5.5 11.5Z" fill="#9a9a9a"/></svg>
<div class="a" style="left:357px;top:163px;width:902px;height:24px;background:linear-gradient(#fcfcfc,#f0f0f0);"></div>
<div class="a" style="left:360px;top:166px;width:1px;height:18px;background:#b9b9b9;"></div>
<svg class="a" style="left:365px;top:167px;" width="17" height="15" viewBox="0 0 17 15"><rect x=".5" y=".5" width="15" height="13" rx="1" fill="#e3ecec" stroke="#8f9b9b"/><rect x="1" y="1" width="14" height="2" fill="#c6c6c6"/><circle cx="9" cy="8" r="3.6" fill="#f4fafa" stroke="#8a8a8a" stroke-width="1"/><path d="M11.8 10.8L15 14" stroke="#777" stroke-width="1.6"/></svg>
<svg class="a" style="left:387.0px;top:173.5px;" width="5" height="3" viewBox="0 0 5 3"><path d="M0 0H5L2.5 3Z" fill="#222"/></svg>
<div class="a" style="left:398px;top:166px;width:1px;height:18px;background:#b9b9b9;"></div>
<svg class="a" style="left:404px;top:166px;" width="17" height="18" viewBox="0 0 17 18"><path d="M1 3L4 1L11 8L8 11Z" fill="#f4f4f4" stroke="#aaa" stroke-width=".7"/><path d="M4 4.5L8.5 9" stroke="#2f7de0" stroke-width="2.2"/><path d="M5.5 2.5L7.5 4.5" stroke="#e03a3a" stroke-width="2"/><circle cx="12" cy="9" r="3.6" fill="#f0f6ff" stroke="#999" stroke-width="1"/><path d="M9.5 11.5L5 16.5" stroke="#777" stroke-width="1.6"/></svg>
<span class="t" style="left:429px;top:169px;font-size:12px;line-height:12px;color:#111;letter-spacing:-0.151px;">Layout (Web)</span>
<svg class="a" style="left:505.5px;top:173.5px;" width="5" height="3" viewBox="0 0 5 3"><path d="M0 0H5L2.5 3Z" fill="#222"/></svg>
<span class="t" style="left:520px;top:169px;font-size:12px;line-height:12px;color:#111;letter-spacing:-0.042px;">Medium (Standard)</span>
<svg class="a" style="left:628.8px;top:173.5px;" width="5" height="3" viewBox="0 0 5 3"><path d="M0 0H5L2.5 3Z" fill="#222"/></svg>
<span class="t" style="left:643.3px;top:169px;font-size:12px;line-height:12px;color:#8a8a8a;letter-spacing:-0.120px;">Seiten-Layout</span>
<svg class="a" style="left:721.5px;top:173.5px;" width="5" height="3" viewBox="0 0 5 3"><path d="M0 0H5L2.5 3Z" fill="#9a9a9a"/></svg>
<div class="a" style="left:734px;top:166px;width:1px;height:18px;background:#b9b9b9;"></div>
<svg class="a" style="left:741px;top:166px;" width="16" height="18" viewBox="0 0 16 18"><path d="M1.5 .5H9L12.5 4V15.5H1.5Z" fill="#edf3f3" stroke="#9aa8a8" stroke-width=".8"/><circle cx="6" cy="7" r="4.3" fill="#3b93e8"/><path d="M3 5.5C4.5 4 7.5 4 9 5.5" stroke="#a9d4fa" stroke-width="1.2" fill="none"/><ellipse cx="9" cy="14.5" rx="2.4" ry="1.7" fill="none" stroke="#555" stroke-width="1"/><ellipse cx="12.5" cy="14.5" rx="2.4" ry="1.7" fill="none" stroke="#555" stroke-width="1"/></svg>
<svg class="a" style="left:763px;top:166px;" width="17" height="18" viewBox="0 0 17 18"><path d="M.5 .5H6.5L9.5 3.5V11.5H.5Z" fill="#edf3f3" stroke="#9aa8a8" stroke-width=".8"/><path d="M6.5 5.5H12.5L15.5 8.5V16.5H6.5Z" fill="#edf3f3" stroke="#9aa8a8" stroke-width=".8"/><rect x="3" y="8" width="6" height="2.2" fill="#e02020"/><rect x="10" y="12.5" width="6" height="2.2" fill="#e02020"/><path d="M4 5.5H10M8 3.5L10.3 5.5L8 7.5" fill="none" stroke="#2a5be0" stroke-width="1.1"/></svg>
<svg class="a" style="left:785px;top:167px;" width="17" height="13" viewBox="0 0 17 13"><defs><linearGradient id="gim" x1="0" y1="0" x2="0" y2="1"><stop offset="0" stop-color="#1d5fa8"/><stop offset=".55" stop-color="#8fc0e6"/><stop offset="1" stop-color="#f2f6f2"/></linearGradient></defs><rect x=".5" y=".5" width="15.5" height="11.5" fill="#fff" stroke="#8a8a8a"/><rect x="2" y="2" width="12.5" height="8.5" fill="url(#gim)"/><path d="M2 10.5C5 6 9 7 14.5 10.5Z" fill="#2d6a3a"/></svg>
<svg class="a" style="left:806.5px;top:173.5px;" width="5" height="3" viewBox="0 0 5 3"><path d="M0 0H5L2.5 3Z" fill="#222"/></svg>
<svg class="a" style="left:819px;top:166px;" width="13" height="17" viewBox="0 0 13 17"><path d="M.5 .5H8L12 4.5V15.5H.5Z" fill="#e6f0f0" stroke="#9aa8a8" stroke-width=".8"/><path d="M1 6.5C4 6 6 10 6.5 11C3.5 12 1 10.5 1 6.5ZM12 6.5C9 6 7 10 6.5 11C9.5 12 12 10.5 12 6.5Z" fill="#5aaee6"/><path d="M2.5 15L10 5.5M10.5 15L3 5.5" stroke="#9a9a9a" stroke-width="1"/></svg>
<svg class="a" style="left:838.5px;top:173.5px;" width="5" height="3" viewBox="0 0 5 3"><path d="M0 0H5L2.5 3Z" fill="#222"/></svg>
<div class="a" style="left:850px;top:166px;width:1px;height:18px;background:#b9b9b9;"></div>
<svg class="a" style="left:857px;top:166px;" width="13" height="17" viewBox="0 0 13 17"><path d="M.5 .5H8L12 4.5V16.5H.5Z" fill="#eef3f3" stroke="#9aa8a8" stroke-width=".8"/><text x="3" y="11" font-family="Liberation Serif" font-style="italic" font-weight="bold" font-size="10" fill="#333">x</text><path d="M3 12.5H9.5M3 14.5H9.5" stroke="#333" stroke-width=".8"/></svg>
<svg class="a" style="left:876.5px;top:173.5px;" width="5" height="3" viewBox="0 0 5 3"><path d="M0 0H5L2.5 3Z" fill="#222"/></svg>
<svg class="a" style="left:889px;top:166px;" width="13" height="17" viewBox="0 0 13 17"><path d="M.5 .5H8L12 4.5V16.5H.5Z" fill="#eef3f3" stroke="#9aa8a8" stroke-width=".8"/><text x="3" y="14" font-family="Liberation Serif" font-size="12" fill="#333">a</text></svg>
<svg class="a" style="left:908.5px;top:173.5px;" width="5" height="3" viewBox="0 0 5 3"><path d="M0 0H5L2.5 3Z" fill="#222"/></svg>
<div class="a" style="left:920px;top:166px;width:1px;height:18px;background:#b9b9b9;"></div>
<svg class="a" style="left:926px;top:167px;" width="16" height="13" viewBox="0 0 16 13"><rect x=".7" y=".7" width="14.6" height="11.6" rx="3" fill="#d8e2fb" stroke="#3f5fd6" stroke-width="1.3"/><text x="8" y="10" text-anchor="middle" font-family="Liberation Mono" font-weight="bold" font-size="9" fill="#2a49c0">iI</text></svg>
<svg class="a" style="left:949px;top:167px;" width="16" height="13" viewBox="0 0 16 13"><rect x=".7" y=".7" width="14.6" height="11.6" rx="3" fill="#d8e2fb" stroke="#3f5fd6" stroke-width="1.3"/><text x="8" y="10" text-anchor="middle" font-family="Liberation Mono" font-weight="bold" font-size="9" fill="#2a49c0">CI</text></svg>
<div class="a" style="left:972px;top:166px;width:1px;height:18px;background:#b9b9b9;"></div>
<div class="a" style="left:975px;top:164px;width:23px;height:22px;background:#f7fbff;border:1px solid #1f7fd8;box-sizing:border-box;"></div>
<span class="t" style="left:981.5px;top:168px;font-size:13px;line-height:13px;color:#111;font-weight:bold;">¶</span>
<svg class="a" style="left:1000px;top:165px;" width="17" height="19" viewBox="0 0 17 19"><path d="M3 7L9 1L15 7L9 12" fill="none" stroke="#2f7de0" stroke-width="1.2"/><ellipse cx="6.5" cy="13.5" rx="6" ry="3.6" fill="#fff" stroke="#222" stroke-width="1.1"/><circle cx="6.5" cy="13.5" r="2.6" fill="#222"/><path d="M1 11C3 8.5 9 8.5 12 11" fill="none" stroke="#222" stroke-width="1.3"/></svg>
<svg class="a" style="left:1021.5px;top:173.5px;" width="5" height="3" viewBox="0 0 5 3"><path d="M0 0H5L2.5 3Z" fill="#222"/></svg>
<svg class="a" style="left:1033.5px;top:167px;" width="16" height="16" viewBox="0 0 16 16"><rect x=".5" y=".5" width="9.5" height="9.5" rx=".8" fill="#f3f3f3" stroke="#b8b8b8"/><rect x="3" y="3" width="9.5" height="9.5" rx=".8" fill="#f3f3f3" stroke="#b8b8b8"/><rect x="5.5" y="5.5" width="10" height="10" rx=".8" fill="#f3f3f3" stroke="#b8b8b8"/><path d="M7.8 10.5H13.2M10.5 7.8V13.2" stroke="#b8b8b8" stroke-width="1.1"/></svg>
<svg class="a" style="left:1056px;top:167px;" width="16" height="16" viewBox="0 0 16 16"><rect x=".5" y=".5" width="9.5" height="9.5" rx=".8" fill="#fff" stroke="#3c5be0"/><rect x="3" y="3" width="9.5" height="9.5" rx=".8" fill="#fff" stroke="#3c5be0"/><rect x="5.5" y="5.5" width="10" height="10" rx=".8" fill="#fff" stroke="#3c5be0"/><path d="M7.8 10.5H13.2" stroke="#3c5be0" stroke-width="1.1"/></svg>
<div class="a" style="left:1079px;top:166px;width:1px;height:18px;background:#b9b9b9;"></div>
<svg class="a" style="left:1085px;top:168px;" width="17" height="13" viewBox="0 0 17 13"><rect x=".5" y=".5" width="16" height="12" rx="1" fill="#f3f3f3" stroke="#b5b5b5"/><rect x="1" y="1" width="15" height="2" fill="#c9c9c9"/><path d="M2 7.5H6.5M4.5 5L7 7.5L4.5 10" fill="none" stroke="#2f8be6" stroke-width="1.6"/><path d="M9 5.5H15M9 8H15M9 10.5H15" stroke="#9a9a9a" stroke-width=".9"/></svg>
<div class="a" style="left:357px;top:187px;width:902px;height:580px;background:#fcfcfc;"></div>
<div class="a" style="left:506px;top:233px;width:737px;height:534px;background:#ffffff;"></div>
<div class="a" style="left:526px;top:189px;width:82px;height:13px;background:#ffffff;border:1px solid #a9a9a9;box-sizing:border-box;"></div>
<span class="t" style="left:529px;top:192px;font-size:9px;line-height:9px;color:#a9a9a9;letter-spacing:0.141px;">MadCap:keyword</span>
<div class="a" style="left:1243px;top:233px;width:15px;height:534px;background:#f0f0f0;"></div>
<div class="a" style="left:1243px;top:250px;width:15px;height:348px;background:#c1c1c1;"></div>
<svg class="a" style="left:1246px;top:238px;" width="9" height="6" viewBox="0 0 9 6"><path d="M.8 5.2L4.5 1.5L8.2 5.2" fill="none" stroke="#404040" stroke-width="1.6"/></svg>
<svg class="a" style="left:1246px;top:755px;" width="9" height="6" viewBox="0 0 9 6"><path d="M.8 .8L4.5 4.5L8.2 .8" fill="none" stroke="#404040" stroke-width="1.6"/></svg>
<div class="a" style="left:357px;top:187px;width:886px;height:580px;overflow:hidden"><div class="a" style="left:-357px;top:-187px;width:1559px;height:846px">
<div class="a" style="left:358px;top:236px;width:12px;height:531px;background:#f6f6f6;"></div>
<div class="a" style="left:358px;top:235px;width:13px;height:1px;background:#a8a8a8;"></div>
<div class="a" style="left:370px;top:235px;width:1px;height:540px;background:#a8a8a8;"></div>
<div class="a" style="left:370px;top:248px;width:14px;height:1px;background:#a8a8a8;"></div>
<div class="a" style="left:383px;top:248px;width:1px;height:530px;background:#a8a8a8;"></div>
<span class="t" style="left:358.5px;top:257.5px;font-size:10px;line-height:10px;color:#b0b0b0;transform-origin:0 0;transform:rotate(-90deg)">html</span>
<span class="t" style="left:371.5px;top:271.5px;font-size:10px;line-height:10px;color:#b0b0b0;transform-origin:0 0;transform:rotate(-90deg)">body</span>
<div class="a" style="left:383px;top:264px;width:14px;height:80px;background:#b9d8f5;border:1px solid #a2aeb8;box-sizing:border-box;"></div>
<span class="t" style="left:384.5px;top:279.5px;font-size:10px;line-height:10px;color:#222;transform-origin:0 0;transform:rotate(-90deg)">h1</span>
<div class="a" style="left:383px;top:359px;width:14px;height:20px;background:#f7f7f7;border:1px solid #a8a8a8;box-sizing:border-box;"></div>
<span class="t" style="left:384.5px;top:371px;font-size:10px;line-height:10px;color:#b0b0b0;transform-origin:0 0;transform:rotate(-90deg)">p</span>
<div class="a" style="left:383px;top:402px;width:14px;height:137px;background:#f9f9f9;border:1px solid #a8a8a8;box-sizing:border-box;"></div>
<div class="a" style="left:396px;top:402px;width:14px;height:137px;background:#f9f9f9;border:1px solid #a8a8a8;box-sizing:border-box;"></div>
<div class="a" style="left:409px;top:402px;width:14px;height:137px;background:#f9f9f9;border:1px solid #a8a8a8;box-sizing:border-box;"></div>
<div class="a" style="left:409px;top:438px;width:14px;height:1px;background:#a8a8a8;"></div>
<span class="t" style="left:385px;top:427px;font-size:10px;line-height:10px;color:#b0b0b0;transform-origin:0 0;transform:rotate(-90deg)">table</span>
<span class="t" style="left:398px;top:433px;font-size:10px;line-height:10px;color:#b0b0b0;transform-origin:0 0;transform:rotate(-90deg)">tbody</span>
<span class="t" style="left:411px;top:413px;font-size:10px;line-height:10px;color:#b0b0b0;transform-origin:0 0;transform:rotate(-90deg)">tr</span>
<span class="t" style="left:411px;top:449px;font-size:10px;line-height:10px;color:#b0b0b0;transform-origin:0 0;transform:rotate(-90deg)">tr</span>
<div class="a" style="left:383px;top:562px;width:14px;height:110px;background:#f9f9f9;border:1px solid #a8a8a8;box-sizing:border-box;background-color:#fff5cc;background-image:conic-gradient(#ffcbe8 25%,transparent 0 50%,#ffcbe8 0 75%,transparent 0);background-size:8px 8px;"></div>
<div class="a" style="left:396px;top:562px;width:14px;height:110px;background:#f9f9f9;border:1px solid #a8a8a8;box-sizing:border-box;"></div>
<div class="a" style="left:409px;top:562px;width:14px;height:110px;background:#f9f9f9;border:1px solid #a8a8a8;box-sizing:border-box;"></div>
<div class="a" style="left:409px;top:597px;width:14px;height:1px;background:#a8a8a8;"></div>
<span class="t" style="left:385px;top:587px;font-size:10px;line-height:10px;color:#b0b0b0;transform-origin:0 0;transform:rotate(-90deg)">table</span>
<span class="t" style="left:398px;top:593px;font-size:10px;line-height:10px;color:#b0b0b0;transform-origin:0 0;transform:rotate(-90deg)">tbody</span>
<span class="t" style="left:411px;top:573px;font-size:10px;line-height:10px;color:#b0b0b0;transform-origin:0 0;transform:rotate(-90deg)">tr</span>
<span class="t" style="left:411px;top:608px;font-size:10px;line-height:10px;color:#b0b0b0;transform-origin:0 0;transform:rotate(-90deg)">tr</span>
<div class="a" style="left:383px;top:695px;width:14px;height:96px;background:#f9f9f9;border:1px solid #a8a8a8;box-sizing:border-box;background-color:#d8ffff;background-image:conic-gradient(#ccffff 25%,transparent 0 50%,#ccffff 0 75%,transparent 0);background-size:8px 8px;"></div>
<div class="a" style="left:396px;top:695px;width:14px;height:96px;background:#f9f9f9;border:1px solid #a8a8a8;box-sizing:border-box;"></div>
<div class="a" style="left:409px;top:695px;width:14px;height:96px;background:#f9f9f9;border:1px solid #a8a8a8;box-sizing:border-box;"></div>
<div class="a" style="left:409px;top:730px;width:14px;height:1px;background:#a8a8a8;"></div>
<span class="t" style="left:385px;top:720px;font-size:10px;line-height:10px;color:#b0b0b0;transform-origin:0 0;transform:rotate(-90deg)">table</span>
<span class="t" style="left:398px;top:726px;font-size:10px;line-height:10px;color:#b0b0b0;transform-origin:0 0;transform:rotate(-90deg)">tbody</span>
<span class="t" style="left:411px;top:706px;font-size:10px;line-height:10px;color:#b0b0b0;transform-origin:0 0;transform:rotate(-90deg)">tr</span>
<span class="t" style="left:411px;top:741px;font-size:10px;line-height:10px;color:#b0b0b0;transform-origin:0 0;transform:rotate(-90deg)">tr</span>
<svg class="a" style="left:514.5px;top:261.5px;" width="5" height="44" viewBox="0 0 5 44"><path d="M2.5 4V40" stroke="#8a8a8a" stroke-width="1"/><rect x=".5" y=".5" width="4" height="4" fill="#fff" stroke="#8a8a8a"/><rect x=".5" y="39.5" width="4" height="4" fill="#fff" stroke="#8a8a8a"/></svg>
<span class="t" style="left:516px;top:269px;font-size:28.6px;line-height:28.6px;color:#0093a0;font-weight:bold;letter-spacing:-0.555px;">Allgemeine</span>
<div class="a" style="left:668px;top:281px;width:4px;height:4px;background:#1a1aff;"></div>
<div class="a" style="left:674px;top:264px;width:401px;height:40px;background:#98fb98;border:1px solid #a0a0a0;box-sizing:border-box;border-radius:4px;"></div>
<span class="t" style="left:680px;top:269px;font-size:28.6px;line-height:28.6px;color:#0093a0;font-weight:bold;letter-spacing:-0.359px;">Allgemeine Sicherheitshin…</span>
<span class="t" style="left:516px;top:309px;font-size:28.6px;line-height:28.6px;color:#0093a0;font-weight:bold;letter-spacing:-0.627px;">Sicherheitshinweise</span>
<svg class="a" style="left:783.7px;top:309.5px;" width="20.7" height="24.1" viewBox="0 0 20.7 24.1"><path d="M0 16L7.8 8.7V12.5H12.3V0L15.9 4.7L19.7 0V9.4L10.2 18.9H7.8V23.1Z" fill="none" stroke="#1a1aff" stroke-width="1.50" stroke-linejoin="miter" transform="scale(1.0)"/></svg>
<span class="t" style="left:516px;top:362px;font-size:13px;line-height:13px;color:#111;letter-spacing:0.634px;">Beachten<span style="color:#2a2aff">·</span>Sie<span style="color:#2a2aff">·</span>beim<span style="color:#2a2aff">·</span>Umgang<span style="color:#2a2aff">·</span>mit<span style="color:#2a2aff">·</span>dem<span style="color:#2a2aff">·</span>Gerät<span style="color:#2a2aff">·</span>die<span style="color:#2a2aff">·</span>folgenden<span style="color:#2a2aff">·</span>Sicherheitshinweise.</span>
<svg class="a" style="left:1023.5px;top:362.5px;" width="9.3" height="10.7" viewBox="0 0 9.3 10.7"><path d="M0 16L7.8 8.7V12.5H12.3V0L15.9 4.7L19.7 0V9.4L10.2 18.9H7.8V23.1Z" fill="none" stroke="#1a1aff" stroke-width="2.02" stroke-linejoin="miter" transform="scale(0.42)"/></svg>
<div class="a" style="left:516px;top:402px;width:703px;height:136px;box-sizing:border-box;border:1px dotted #c9c9c9"></div>
<div class="a" style="left:516px;top:437px;width:94px;height:0;border-top:1px dotted #c9c9c9"></div>
<div class="a" style="left:610px;top:402px;width:0;height:136px;border-left:1px dotted #c9c9c9"></div>
<div class="a" style="left:610px;top:402px;width:131.6px;height:35px;background:#ff8c00;"></div>
<div class="a" style="left:610px;top:437px;width:610px;height:1px;background:#ff8c00;"></div>
<div class="a" style="left:610px;top:537px;width:610px;height:1px;background:#ff8c00;"></div>
<div class="a" style="left:518px;top:420px;width:2.4px;height:2.4px;background:#8b1a1a;"></div>
<svg class="a" style="left:522.3px;top:417.5px;" width="10.3" height="11.9" viewBox="0 0 10.3 11.9"><path d="M0 16L7.8 8.7V12.5H12.3V0L15.9 4.7L19.7 0V9.4L10.2 18.9H7.8V23.1Z" fill="none" stroke="#1a1aff" stroke-width="1.81" stroke-linejoin="miter" transform="scale(0.47)"/></svg>
<svg class="a" style="left:619px;top:406.3px;" width="22" height="19.6" viewBox="0 0 22 19.6"><path d="M11 0L22 19.6H0Z" fill="#1c1c1c"/><path d="M11 6A1.15 1.15 0 0 1 12.15 7.2L11.6 14H10.4L9.85 7.2A1.15 1.15 0 0 1 11 6Z" fill="#ff8c00"/><circle cx="11" cy="16.3" r="1.35" fill="#ff8c00"/></svg>
<div class="a" style="left:643.5px;top:418.5px;width:2.5px;height:2.5px;background:#1a1aff;"></div>
<span class="t" style="left:647px;top:412px;font-size:15.5px;line-height:15.5px;color:#111;-webkit-text-stroke:.3px #111;letter-spacing:0.595px;">WARNUNG</span>
<svg class="a" style="left:733.5px;top:411.8px;" width="11.8" height="13.7" viewBox="0 0 11.8 13.7"><path d="M0 16L7.8 8.7V12.5H12.3V0L15.9 4.7L19.7 0V9.4L10.2 18.9H7.8V23.1Z" fill="none" stroke="#1a1aff" stroke-width="1.55" stroke-linejoin="miter" transform="scale(0.55)"/></svg>
<div class="a" style="left:744.5px;top:419px;width:2.6px;height:2.6px;background:#8b0000;"></div>
<svg class="a" style="left:748.8px;top:414.5px;" width="11.8" height="13.7" viewBox="0 0 11.8 13.7"><path d="M0 16L7.8 8.7V12.5H12.3V0L15.9 4.7L19.7 0V9.4L10.2 18.9H7.8V23.1Z" fill="none" stroke="#1a1aff" stroke-width="1.55" stroke-linejoin="miter" transform="scale(0.55)"/></svg>
<svg class="a" style="left:529px;top:452.5px;" width="68" height="60" viewBox="0 0 68 60"><path d="M34 3L65.5 57.5H2.5Z" fill="#f6bb1e" stroke="#111" stroke-width="4.2" stroke-linejoin="round"/><path d="M36.5 17L27 35.5H33L29.5 50.5L27.2 49.5L30.5 58L35.5 50.8L33 51.2L39.5 31.5H33.5L39 17Z" fill="#111" transform="translate(0,-4) scale(1,.95)"/></svg>
<span class="t" style="left:615px;top:449px;font-size:13px;line-height:13px;color:#111;font-weight:bold;letter-spacing:0.334px;">Stromschlag-Gefahr</span>
<svg class="a" style="left:747.5px;top:450.3px;" width="9.3" height="10.7" viewBox="0 0 9.3 10.7"><path d="M0 16L7.8 8.7V12.5H12.3V0L15.9 4.7L19.7 0V9.4L10.2 18.9H7.8V23.1Z" fill="none" stroke="#1a1aff" stroke-width="2.02" stroke-linejoin="miter" transform="scale(0.42)"/></svg>
<svg class="a" style="left:639.5px;top:470.0px;" width="14" height="8" viewBox="0 0 14 8"><path d="M0 4H13M9.5 .8L13 4L9.5 7.2" fill="none" stroke="#000" stroke-width="1.1"/></svg>
<span class="t" style="left:671.3px;top:473px;font-size:13px;line-height:13px;color:#111;letter-spacing:0.517px;">Schützen<span style="color:#2a2aff">·</span>Sie<span style="color:#2a2aff">·</span>das<span style="color:#2a2aff">·</span>Gerät<span style="color:#2a2aff">·</span>vor<span style="color:#2a2aff">·</span>Feuchtigkeit<span style="color:#2a2aff">·</span>und<span style="color:#2a2aff">·</span>Niederschlag!</span>
<svg class="a" style="left:1049.5px;top:473.7px;" width="9.3" height="10.7" viewBox="0 0 9.3 10.7"><path d="M0 16L7.8 8.7V12.5H12.3V0L15.9 4.7L19.7 0V9.4L10.2 18.9H7.8V23.1Z" fill="none" stroke="#1a1aff" stroke-width="2.02" stroke-linejoin="miter" transform="scale(0.42)"/></svg>
<svg class="a" style="left:639.5px;top:489.5px;" width="14" height="8" viewBox="0 0 14 8"><path d="M0 4H13M9.5 .8L13 4L9.5 7.2" fill="none" stroke="#000" stroke-width="1.1"/></svg>
<span class="t" style="left:671.3px;top:492px;font-size:13px;line-height:13px;color:#111;letter-spacing:0.629px;">Nehmen<span style="color:#2a2aff">·</span>Sie<span style="color:#2a2aff">·</span>am<span style="color:#2a2aff">·</span>Gerät<span style="color:#2a2aff">·</span>nur<span style="color:#2a2aff">·</span>Veränderungen<span style="color:#2a2aff">·</span>vor,<span style="color:#2a2aff">·</span>die<span style="color:#2a2aff">·</span>ausdrücklich<span style="color:#2a2aff">·</span>in<span style="color:#2a2aff">·</span>der<span style="color:#2a2aff">·</span></span>
<span class="t" style="left:671.3px;top:512px;font-size:13px;line-height:13px;color:#111;letter-spacing:0.683px;">Bedienungsanleitung<span style="color:#2a2aff">·</span>beschrieben<span style="color:#2a2aff">·</span>sind!</span>
<svg class="a" style="left:927.5px;top:512.7px;" width="9.3" height="10.7" viewBox="0 0 9.3 10.7"><path d="M0 16L7.8 8.7V12.5H12.3V0L15.9 4.7L19.7 0V9.4L10.2 18.9H7.8V23.1Z" fill="none" stroke="#1a1aff" stroke-width="2.02" stroke-linejoin="miter" transform="scale(0.42)"/></svg>
<svg class="a" style="left:516px;top:562px;" width="703" height="109" viewBox="0 0 703 109"><defs><pattern id="pp" width="12" height="8" patternUnits="userSpaceOnUse"><rect width="12" height="8" fill="#ffffcc"/><rect x="0" y="0" width="4" height="4" fill="#ffeed4"/><rect x="4" y="0" width="4" height="4" fill="#ffd0ee"/><rect x="0" y="4" width="4" height="4" fill="#ffd0ee"/><rect x="8" y="4" width="4" height="4" fill="#ffeed4"/></pattern></defs><rect width="703" height="109" fill="url(#pp)" shape-rendering="crispEdges"/></svg>
<div class="a" style="left:516px;top:562px;width:703px;height:109px;box-sizing:border-box;border:1px dotted #c9c9c9"></div>
<div class="a" style="left:516px;top:597px;width:94px;height:0;border-top:1px dotted #c9c9c9"></div>
<div class="a" style="left:610px;top:562px;width:0;height:109px;border-left:1px dotted #c9c9c9"></div>
<div class="a" style="left:610px;top:562px;width:131.6px;height:35px;background:#ff8c00;"></div>
<div class="a" style="left:610px;top:597px;width:610px;height:1px;background:#ff8c00;"></div>
<div class="a" style="left:610px;top:670px;width:610px;height:1px;background:#ff8c00;"></div>
<div class="a" style="left:518px;top:580px;width:2.4px;height:2.4px;background:#8b1a1a;"></div>
<svg class="a" style="left:522.3px;top:577.5px;" width="10.3" height="11.9" viewBox="0 0 10.3 11.9"><path d="M0 16L7.8 8.7V12.5H12.3V0L15.9 4.7L19.7 0V9.4L10.2 18.9H7.8V23.1Z" fill="none" stroke="#1a1aff" stroke-width="1.81" stroke-linejoin="miter" transform="scale(0.47)"/></svg>
<svg class="a" style="left:619px;top:566.3px;" width="22" height="19.6" viewBox="0 0 22 19.6"><path d="M11 0L22 19.6H0Z" fill="#1c1c1c"/><path d="M11 6A1.15 1.15 0 0 1 12.15 7.2L11.6 14H10.4L9.85 7.2A1.15 1.15 0 0 1 11 6Z" fill="#ff8c00"/><circle cx="11" cy="16.3" r="1.35" fill="#ff8c00"/></svg>
<div class="a" style="left:643.5px;top:578.5px;width:2.5px;height:2.5px;background:#1a1aff;"></div>
<span class="t" style="left:647px;top:572px;font-size:15.5px;line-height:15.5px;color:#111;-webkit-text-stroke:.3px #111;letter-spacing:0.595px;">WARNUNG</span>
<svg class="a" style="left:733.5px;top:571.8px;" width="11.8" height="13.7" viewBox="0 0 11.8 13.7"><path d="M0 16L7.8 8.7V12.5H12.3V0L15.9 4.7L19.7 0V9.4L10.2 18.9H7.8V23.1Z" fill="none" stroke="#1a1aff" stroke-width="1.55" stroke-linejoin="miter" transform="scale(0.55)"/></svg>
<div class="a" style="left:744.5px;top:579px;width:2.6px;height:2.6px;background:#8b0000;"></div>
<svg class="a" style="left:748.8px;top:574.5px;" width="11.8" height="13.7" viewBox="0 0 11.8 13.7"><path d="M0 16L7.8 8.7V12.5H12.3V0L15.9 4.7L19.7 0V9.4L10.2 18.9H7.8V23.1Z" fill="none" stroke="#1a1aff" stroke-width="1.55" stroke-linejoin="miter" transform="scale(0.55)"/></svg>
<svg class="a" style="left:529px;top:598px;" width="68" height="60" viewBox="0 0 68 60"><path d="M34 3L65.5 57.5H2.5Z" fill="#f6bb1e" stroke="#111" stroke-width="4.2" stroke-linejoin="round"/><path d="M34 21C36 27 42 29 41.5 37C41.2 42 38 44.5 34.5 44.5C36.5 42 37 39 35 36C34.5 39 33 40 32.5 42C31 40 31 37 32 34C29.5 36 28.5 39 29.5 42.5C27 41.5 25.5 38.5 26.5 35C27.3 32 29.5 31 29.8 27.5C31.5 28.5 32 30.5 32 32C34 29 35 25 34 21Z" fill="#111"/><path d="M25.5 44.5C28 47 39.5 47 42.5 44.5C41 46.5 27 46.5 25.5 44.5Z" fill="#111"/><rect x="23" y="49" width="22" height="2.6" fill="#111"/></svg>
<span class="t" style="left:615px;top:615px;font-size:13px;line-height:13px;color:#111;font-weight:bold;letter-spacing:0.428px;">Brandgefahr</span>
<svg class="a" style="left:698.5px;top:616.2px;" width="9.3" height="10.7" viewBox="0 0 9.3 10.7"><path d="M0 16L7.8 8.7V12.5H12.3V0L15.9 4.7L19.7 0V9.4L10.2 18.9H7.8V23.1Z" fill="none" stroke="#1a1aff" stroke-width="2.02" stroke-linejoin="miter" transform="scale(0.42)"/></svg>
<svg class="a" style="left:639.5px;top:635.2px;" width="14" height="8" viewBox="0 0 14 8"><path d="M0 4H13M9.5 .8L13 4L9.5 7.2" fill="none" stroke="#000" stroke-width="1.1"/></svg>
<span class="t" style="left:671.3px;top:638px;font-size:13px;line-height:13px;color:#111;letter-spacing:0.637px;">Halten<span style="color:#2a2aff">·</span>Sie<span style="color:#2a2aff">·</span>das<span style="color:#2a2aff">·</span>Gerät<span style="color:#2a2aff">·</span>während<span style="color:#2a2aff">·</span>des<span style="color:#2a2aff">·</span>Betriebs<span style="color:#2a2aff">·</span>von<span style="color:#2a2aff">·</span>leicht<span style="color:#2a2aff">·</span>entzündlichen<span style="color:#2a2aff">·</span>Stoffen<span style="color:#2a2aff">·</span>fern!</span>
<svg class="a" style="left:1199.5px;top:638.9px;" width="9.3" height="10.7" viewBox="0 0 9.3 10.7"><path d="M0 16L7.8 8.7V12.5H12.3V0L15.9 4.7L19.7 0V9.4L10.2 18.9H7.8V23.1Z" fill="none" stroke="#1a1aff" stroke-width="2.02" stroke-linejoin="miter" transform="scale(0.42)"/></svg>
<div class="a" style="left:516px;top:695px;width:703px;height:105px;background-color:#d8ffff;background-image:conic-gradient(#ccffff 25%,transparent 0 50%,#ccffff 0 75%,transparent 0);background-size:8px 8px;"></div>
<div class="a" style="left:516px;top:695px;width:703px;height:105px;box-sizing:border-box;border:1px dotted #c9c9c9"></div>
<div class="a" style="left:516px;top:730px;width:94px;height:0;border-top:1px dotted #c9c9c9"></div>
<div class="a" style="left:610px;top:695px;width:0;height:105px;border-left:1px dotted #c9c9c9"></div>
<div class="a" style="left:610px;top:695px;width:131.6px;height:35px;background:#ffe100;"></div>
<div class="a" style="left:610px;top:730px;width:610px;height:1px;background:#ffd400;"></div>
<div class="a" style="left:610px;top:799px;width:610px;height:1px;background:#ffd400;"></div>
<div class="a" style="left:518px;top:713px;width:2.4px;height:2.4px;background:#8b1a1a;"></div>
<svg class="a" style="left:522.3px;top:710.5px;" width="10.3" height="11.9" viewBox="0 0 10.3 11.9"><path d="M0 16L7.8 8.7V12.5H12.3V0L15.9 4.7L19.7 0V9.4L10.2 18.9H7.8V23.1Z" fill="none" stroke="#1a1aff" stroke-width="1.81" stroke-linejoin="miter" transform="scale(0.47)"/></svg>
<svg class="a" style="left:622.8px;top:699.3px;" width="22" height="19.6" viewBox="0 0 22 19.6"><path d="M11 0L22 19.6H0Z" fill="#1c1c1c"/><path d="M11 6A1.15 1.15 0 0 1 12.15 7.2L11.6 14H10.4L9.85 7.2A1.15 1.15 0 0 1 11 6Z" fill="#ffe100"/><circle cx="11" cy="16.3" r="1.35" fill="#ffe100"/></svg>
<div class="a" style="left:647.3px;top:711.5px;width:2.5px;height:2.5px;background:#1a1aff;"></div>
<span class="t" style="left:649.4px;top:705px;font-size:15.5px;line-height:15.5px;color:#111;-webkit-text-stroke:.3px #111;letter-spacing:-0.437px;">VORSICHT</span>
<svg class="a" style="left:729.4px;top:704.8px;" width="11.8" height="13.7" viewBox="0 0 11.8 13.7"><path d="M0 16L7.8 8.7V12.5H12.3V0L15.9 4.7L19.7 0V9.4L10.2 18.9H7.8V23.1Z" fill="none" stroke="#1a1aff" stroke-width="1.55" stroke-linejoin="miter" transform="scale(0.55)"/></svg>
<div class="a" style="left:744.5px;top:712px;width:2.6px;height:2.6px;background:#8b0000;"></div>
<svg class="a" style="left:748.8px;top:707.5px;" width="11.8" height="13.7" viewBox="0 0 11.8 13.7"><path d="M0 16L7.8 8.7V12.5H12.3V0L15.9 4.7L19.7 0V9.4L10.2 18.9H7.8V23.1Z" fill="none" stroke="#1a1aff" stroke-width="1.55" stroke-linejoin="miter" transform="scale(0.55)"/></svg>
<svg class="a" style="left:529px;top:744.5px;" width="68" height="60" viewBox="0 0 68 60"><path d="M34 3L65.5 57.5H2.5Z" fill="#f6bb1e" stroke="#111" stroke-width="4.2" stroke-linejoin="round"/><circle cx="34" cy="30" r="5" fill="#111"/></svg>
<span class="t" style="left:615px;top:742px;font-size:13px;line-height:13px;color:#111;font-weight:bold;letter-spacing:0.456px;">Verletzungsgefahr<span style="color:#2a2aff">·</span>durch<span style="color:#2a2aff">·</span>Umfallen</span>
<svg class="a" style="left:843.5px;top:742.7px;" width="9.3" height="10.7" viewBox="0 0 9.3 10.7"><path d="M0 16L7.8 8.7V12.5H12.3V0L15.9 4.7L19.7 0V9.4L10.2 18.9H7.8V23.1Z" fill="none" stroke="#1a1aff" stroke-width="2.02" stroke-linejoin="miter" transform="scale(0.42)"/></svg>
<svg class="a" style="left:639.5px;top:763.6px;" width="14" height="8" viewBox="0 0 14 8"><path d="M0 4H13M9.5 .8L13 4L9.5 7.2" fill="none" stroke="#000" stroke-width="1.1"/></svg>
<span class="t" style="left:671.3px;top:766px;font-size:13px;line-height:13px;color:#111;letter-spacing:0.080px;">Stellen<span style="color:#2a2aff">·</span>Sie<span style="color:#2a2aff">·</span>das<span style="color:#2a2aff">·</span>Gerät<span style="color:#2a2aff">·</span>nur<span style="color:#2a2aff">·</span>auf<span style="color:#2a2aff">·</span>ebenen<span style="color:#2a2aff">·</span>und<span style="color:#2a2aff">·</span>festen<span style="color:#2a2aff">·</span>Untergrund,<span style="color:#2a2aff">·</span>damit<span style="color:#2a2aff">·</span>es<span style="color:#2a2aff">·</span>nicht<span style="color:#2a2aff">·</span>umfallen<span style="color:#2a2aff">·</span>kann!</span>
</div></div>
<div class="a" style="left:357px;top:767px;width:902px;height:25px;background:#fafafa;"></div>
<span class="t" style="left:360px;top:773px;font-size:12px;line-height:12px;color:#111;letter-spacing:-0.273px;">Wörter: 106</span>
<div class="a" style="left:427px;top:771px;width:1px;height:17px;background:#b9b9b9;"></div>
<span class="t" style="left:433px;top:773px;font-size:12px;line-height:12px;color:#111;letter-spacing:-0.114px;">Schriftskalierung:</span>
<div class="a" style="left:532px;top:771px;width:15px;height:14px;background:#e2e2e2;border:1px solid #c3c3c3;box-sizing:border-box;border-radius:1px;"></div>
<div class="a" style="left:536px;top:778px;width:7px;height:1px;background:#b0b0b0;"></div>
<div class="a" style="left:551px;top:768px;width:23px;height:22px;background:#f7fbff;border:1px solid #1f7fd8;box-sizing:border-box;"></div>
<svg class="a" style="left:555px;top:771px;" width="15" height="14" viewBox="0 0 15 14"><rect x=".5" y=".5" width="14" height="13" rx="1" fill="#dfe7fc" stroke="#4a66d8"/><rect x="1" y="1" width="13" height="2" fill="#b9b9c9"/><path d="M4 6V11M6.5 6H8.5V11H6.5ZM10 6H12V11H10Z" fill="none" stroke="#2a49c0" stroke-width=".9"/></svg>
<svg class="a" style="left:578px;top:771px;" width="15" height="14" viewBox="0 0 15 14"><rect x=".5" y=".5" width="14" height="13" rx="1" fill="#dfe7fc" stroke="#4a66d8"/><path d="M4 7H11M7.5 3.5V10.5" stroke="#2a49c0" stroke-width="1.2"/></svg>
<div class="a" style="left:598px;top:768px;width:60px;height:22px;background:#ffffff;border:1px solid #1f7fd8;box-sizing:border-box;"></div>
<div class="a" style="left:645px;top:769px;width:12px;height:20px;background:#bfd6f2;"></div>
<div class="a" style="left:645px;top:769px;width:1px;height:20px;background:#1f7fd8;"></div>
<span class="t" style="left:601.5px;top:773px;font-size:12px;line-height:12px;color:#111;letter-spacing:-0.926px;">100%</span>
<svg class="a" style="left:648.5px;top:778.5px;" width="5" height="3" viewBox="0 0 5 3"><path d="M0 0H5L2.5 3Z" fill="#222"/></svg>
<div class="a" style="left:661px;top:771px;width:1px;height:17px;background:#b9b9b9;"></div>
<div class="a" style="left:665px;top:768px;width:23px;height:22px;background:#f7fbff;border:1px solid #1f7fd8;box-sizing:border-box;"></div>
<svg class="a" style="left:669px;top:772px;" width="15" height="15" viewBox="0 0 15 15"><rect x=".6" y=".6" width="13.8" height="13.8" rx="1.5" fill="#f4f4f4" stroke="#333" stroke-width="1.1"/><rect x="2.4" y="2.4" width="4.4" height="4.4" fill="#f0606a"/><rect x="8.2" y="2.4" width="4.4" height="4.4" fill="#f5b932"/><rect x="2.4" y="8.2" width="4.4" height="4.4" fill="#5bc45b"/><rect x="8.2" y="8.2" width="4.4" height="4.4" fill="#5b9bf0"/></svg>
<div class="a" style="left:690px;top:771px;width:1px;height:17px;background:#b9b9b9;"></div>
<div class="a" style="left:694px;top:768px;width:23px;height:22px;background:#f7fbff;border:1px solid #1f7fd8;box-sizing:border-box;"></div>
<div class="a" style="left:717px;top:768px;width:23px;height:22px;background:#f7fbff;border:1px solid #1f7fd8;box-sizing:border-box;"></div>
<svg class="a" style="left:697px;top:771px;" width="17" height="16" viewBox="0 0 17 16"><rect x="1" y="0" width="4" height="15" fill="#3a8fe0"/><rect x="0" y="10" width="7" height="3" fill="#6ab0f0"/><path d="M8 2H17M8 5H17M8 8H17M8 11H17M8 14H17" stroke="#333" stroke-width="1.2"/></svg>
<svg class="a" style="left:720px;top:771px;" width="17" height="16" viewBox="0 0 17 16"><rect x="4" y="0" width="9" height="4" fill="#3a8fe0"/><rect x="6" y="4" width="5" height="3" fill="#6ab0f0"/><path d="M0 9H17M0 12H17M0 15H17" stroke="#333" stroke-width="1.3"/><path d="M0 2H3M14 2H17" stroke="#333" stroke-width="1.2"/></svg>
<div class="a" style="left:743px;top:771px;width:1px;height:17px;background:#b9b9b9;"></div>
<div class="a" style="left:746px;top:768px;width:23px;height:22px;background:#f7fbff;border:1px solid #1f7fd8;box-sizing:border-box;"></div>
<svg class="a" style="left:749px;top:770px;" width="18" height="18" viewBox="0 0 18 18"><path d="M9 14V2L16.5 8.5L9 13" fill="none" stroke="#444" stroke-width="1"/><ellipse cx="6" cy="12.5" rx="5.5" ry="3.4" fill="#fff" stroke="#222" stroke-width="1"/><circle cx="6" cy="12.5" r="2.4" fill="#222"/></svg>
<svg class="a" style="left:778px;top:773px;" width="17" height="10" viewBox="0 0 17 10"><rect x=".5" y=".5" width="16" height="9" fill="#e9b45f" stroke="#b8842f"/><path d="M3 1V5M5.5 1V3.5M8 1V5M10.5 1V3.5M13 1V5" stroke="#8a5a1a" stroke-width=".8"/></svg>
<svg class="a" style="left:804px;top:770px;" width="11" height="17" viewBox="0 0 11 17"><rect x=".5" y=".5" width="10" height="16" fill="#e9b45f" stroke="#b8842f"/><path d="M1 3H5M1 5.5H3.5M1 8H5M1 10.5H3.5M1 13H5" stroke="#8a5a1a" stroke-width=".8"/></svg>
<div class="a" style="left:823px;top:771px;width:1px;height:17px;background:#b9b9b9;"></div>
<svg class="a" style="left:830px;top:771px;" width="18" height="15" viewBox="0 0 18 15"><path d="M1 0V15M17 0V15" stroke="#222" stroke-width="1.3"/><path d="M3.5 7.5H14.5M6.5 4.5L3.5 7.5L6.5 10.5M11.5 4.5L14.5 7.5L11.5 10.5" fill="none" stroke="#1f6fd0" stroke-width="1.4"/></svg>
<div class="a" style="left:357px;top:792px;width:902px;height:21px;background:linear-gradient(#ececec,#c6c6c6);"></div>
<div class="a" style="left:357px;top:792px;width:902px;height:1px;background:#c4c4c4;"></div>
<div class="a" style="left:357px;top:812px;width:902px;height:1px;background:#a8a8a8;"></div>
<svg class="a" style="left:357px;top:792px;" width="160" height="18" viewBox="0 0 160 18"><path d="M77 .5C83 .5 83 17.5 90 17.5H136C143 17.5 143 .5 149 .5" fill="#dedede" stroke="#a9a9a9"/><path d="M6 .5C13 .5 14 17.5 21 17.5H72C79 17.5 79 .5 85 .5Z" fill="#ffffff" stroke="#a9a9a9"/><path d="M7 0H84.5" stroke="#fff" stroke-width="1.6"/></svg>
<span class="t" style="left:379.8px;top:797px;font-size:10px;line-height:10px;color:#222;letter-spacing:-0.352px;">XML-Editor</span>
<span class="t" style="left:445.5px;top:797px;font-size:10px;line-height:10px;color:#555;letter-spacing:-0.209px;">Text-Editor</span>
<svg class="a" style="left:796px;top:799.5px;" width="5" height="5" viewBox="0 0 5 5"><circle cx="2.5" cy="2.5" r="2" fill="none" stroke="#8a8a8a" stroke-width=".9"/></svg>
<svg class="a" style="left:806px;top:799.5px;" width="5" height="5" viewBox="0 0 5 5"><circle cx="2.5" cy="2.5" r="2" fill="none" stroke="#8a8a8a" stroke-width=".9"/></svg>
<svg class="a" style="left:816px;top:799.5px;" width="5" height="5" viewBox="0 0 5 5"><circle cx="2.5" cy="2.5" r="2" fill="none" stroke="#8a8a8a" stroke-width=".9"/></svg>
<div class="a" style="left:1220px;top:796px;width:13px;height:12px;background:#f4f4f4;border:1px solid #222;box-sizing:border-box;"></div>
<div class="a" style="left:1226px;top:798px;width:1px;height:8px;background:#222;"></div>
<div class="a" style="left:1236px;top:796px;width:13px;height:12px;background:#f4f4f4;border:1px solid #222;box-sizing:border-box;"></div>
<svg class="a" style="left:1238.5px;top:799px;" width="8" height="6" viewBox="0 0 8 6"><path d="M0 6H8L4 0Z" fill="#111"/></svg>
<div class="a" style="left:0px;top:813px;width:1559px;height:4px;background:#5f5f5f;"></div>
<div class="a" style="left:0px;top:817px;width:1559px;height:28px;background:#ececec;"></div>
<div class="a" style="left:0px;top:845px;width:1559px;height:1px;background:#8db52a;"></div>
<div class="a" style="left:625px;top:813px;width:122px;height:25px;background:rgba(255,255,255,.28);border:1px solid #c9c9c9;box-sizing:border-box;"></div>
<span class="t" style="left:632px;top:820px;font-size:12px;line-height:12px;color:#c6c6c6;letter-spacing:-0.15px"><b style="color:#bebebe">Capture</b> screenshot.</span>
<svg class="a" style="left:1121px;top:818px;" width="196" height="22" viewBox="0 0 196 22"><path d="M0 8H170V1L195 11L170 21V14.5H0Z" fill="#ff0000"/></svg>
<svg class="a" style="left:1336px;top:824px;" width="16" height="15" viewBox="0 0 16 15"><path d="M1 13.5L2 10L11.5 1.2L14 3.6L4.5 12.6Z" fill="#f3c93a" stroke="#a4841c" stroke-width=".7"/><path d="M1 13.5L2 10L4.5 12.6Z" fill="#e9d7b0" stroke="#7a6a3a" stroke-width=".5"/><path d="M11.5 1.2L14 3.6L13 4.6L10.5 2.2Z" fill="#e86a6a"/></svg>
<span class="t" style="left:1354.8px;top:825px;font-size:12px;line-height:12px;color:#222;">2</span>
<svg class="a" style="left:1384px;top:822px;" width="16" height="16" viewBox="0 0 16 16"><circle cx="8" cy="8" r="7.3" fill="#e9e9e9" stroke="#8a8a8a" stroke-width="1"/><circle cx="8" cy="8" r="5.6" fill="#d23a34"/><path d="M5 7.5C5.5 5 8.5 4.5 10 6L11 5V8H8L9 7C8 6 6.5 6.3 6.3 7.8ZM11 8.5C10.5 11 7.5 11.5 6 10L5 11V8H8L7 9C8 10 9.5 9.7 9.7 8.2Z" fill="#fff"/></svg>
<span class="t" style="left:1402px;top:825px;font-size:12px;line-height:12px;color:#222;">0</span>
<svg class="a" style="left:1409px;top:825px;" width="5" height="10" viewBox="0 0 5 10"><path d="M2.5 10V1M.5 3L2.5 .8L4.5 3" fill="none" stroke="#333" stroke-width="1"/></svg>
<span class="t" style="left:1420.8px;top:825px;font-size:12px;line-height:12px;color:#222;">0</span>
<svg class="a" style="left:1428px;top:825px;" width="5" height="10" viewBox="0 0 5 10"><path d="M2.5 0V9M.5 7L2.5 9.2L4.5 7" fill="none" stroke="#333" stroke-width="1"/></svg>
<svg class="a" style="left:1458px;top:822px;" width="17" height="17" viewBox="0 0 17 17"><path d="M8.5 16.5V10C8.5 7.5 10 6 13 3.5" fill="none" stroke="#2b8be0" stroke-width="2.6"/><path d="M8.5 11C8.5 8 7 6.5 4 4" fill="none" stroke="#2b8be0" stroke-width="2.2"/><path d="M10.5 1H16V6.5Z" fill="#2b8be0"/><path d="M6 1.5H1V6.5Z" fill="#2b8be0"/></svg>
<span class="t" style="left:1476.7px;top:825px;font-size:12px;line-height:12px;color:#222;letter-spacing:-0.231px;">master</span>
<svg class="a" style="left:1523px;top:828.5px;" width="5" height="3" viewBox="0 0 5 3"><path d="M0 0H5L2.5 3Z" fill="#222"/></svg>
<svg class="a" style="left:1549px;top:835px;" width="9" height="9" viewBox="0 0 9 9"><path d="M7 1V2M7 4V5M4 4V5M7 7V8M4 7V8M1 7V8" stroke="#8a8a8a" stroke-width="1.6"/></svg>
</div></body></html>
